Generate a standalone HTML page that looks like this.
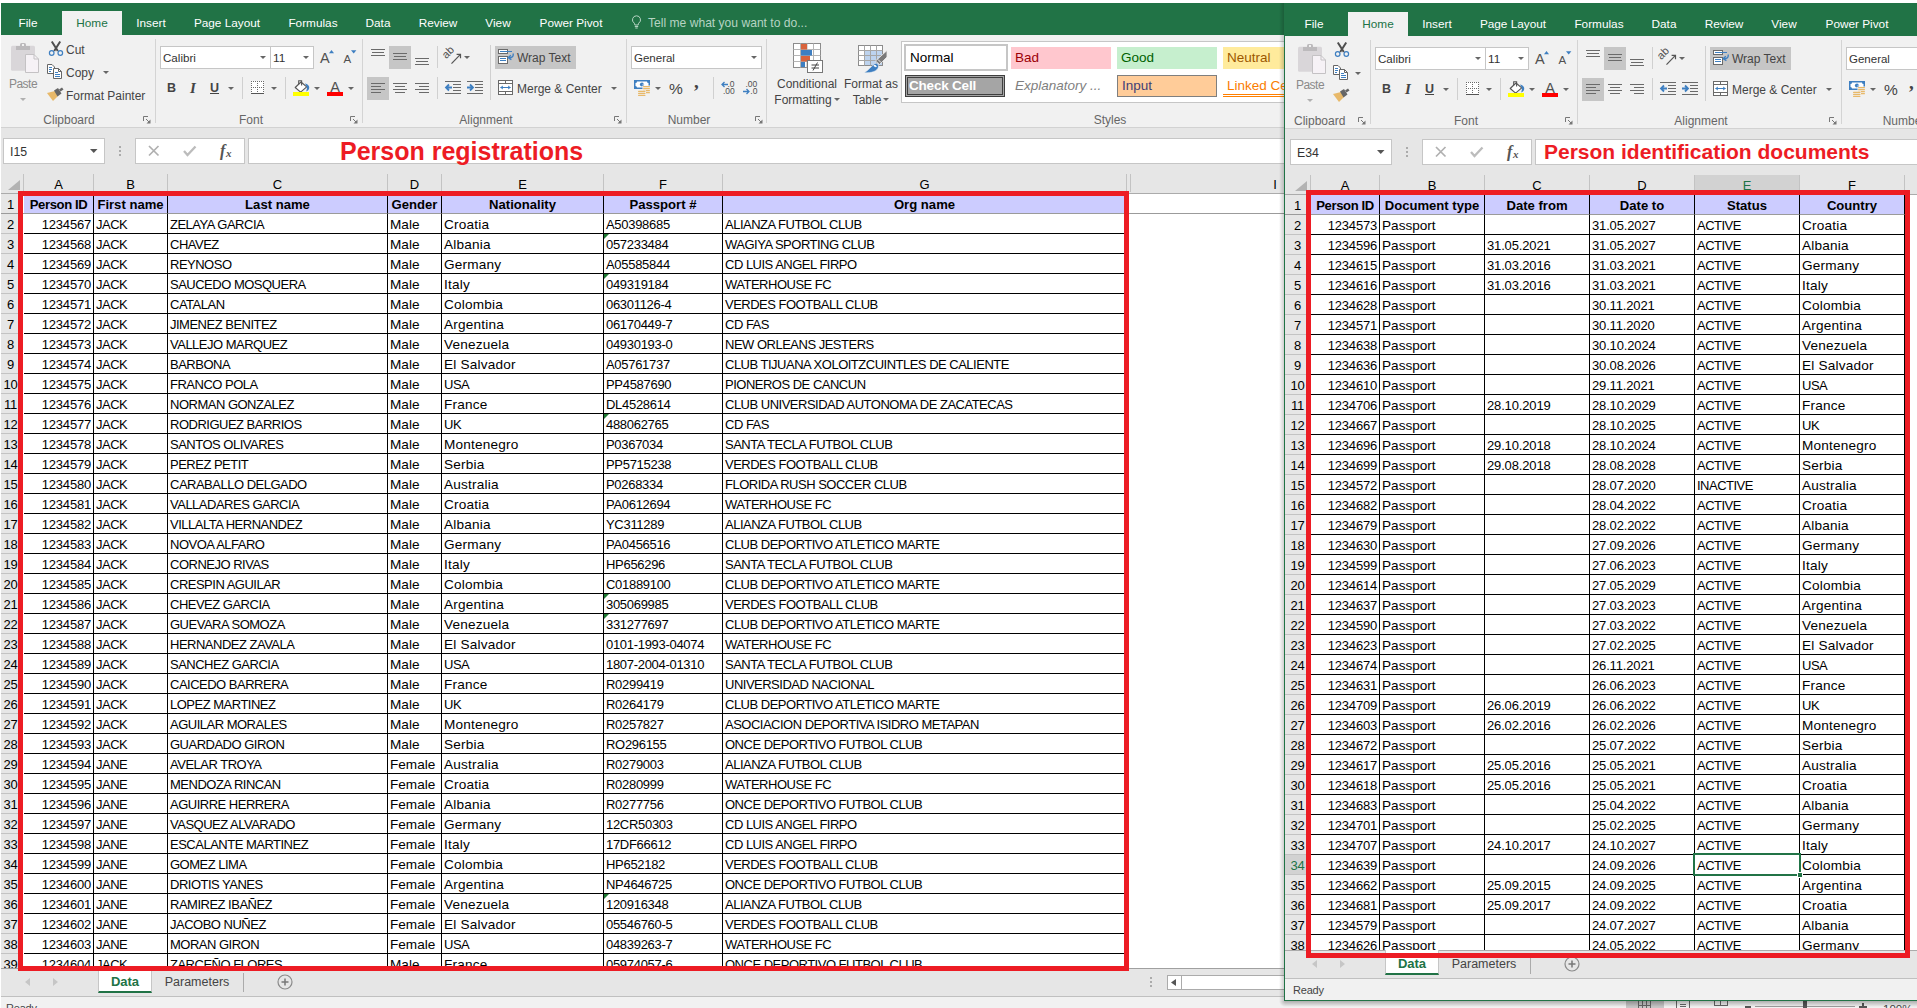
<!DOCTYPE html>
<html lang="en"><head><meta charset="utf-8"><title>Excel - Person registrations</title>
<style>
*{box-sizing:border-box;margin:0;padding:0}
html,body{width:1917px;height:1008px;overflow:hidden;background:#fff}
body{position:relative;font-family:"Liberation Sans",sans-serif;font-size:12px;color:#444}
.abs,.abs>*{position:absolute}
.win{position:absolute;overflow:hidden}
.ui{position:absolute;white-space:nowrap;line-height:14px;font-size:12px;color:#444}
.tab{position:absolute;top:0;height:24px;line-height:24px;font-size:12.3px;color:#fff;white-space:nowrap;text-align:center}
.lbl{position:absolute;white-space:nowrap;font-size:12px;line-height:14px;color:#666;text-align:center}
.vsep{position:absolute;width:1px;background:#d0d0d0}
.gsep{position:absolute;width:1px;background:#d4d4d4}
.hl{position:absolute;background:#c6c6c6}
.box{position:absolute;background:#fff;border:1px solid #c6c6c6}
.dd{position:absolute;width:0;height:0;border-left:3px solid transparent;border-right:3px solid transparent;border-top:3px solid #666}
svg{position:absolute;overflow:visible}
table.grid{position:absolute;border-collapse:separate;border-spacing:0;table-layout:fixed;font-size:13px;color:#000}
table.grid td{height:20px;border-right:1px solid #000;border-bottom:1px solid #000;padding:0 0 0 2px;overflow:hidden;white-space:nowrap;line-height:19px;vertical-align:top;position:relative}
table.grid td span{display:block;position:relative;top:1px}
table.grid tr.h td{background:#ccccff;font-weight:bold;text-align:center;padding:0;border-bottom-color:#9a9a9a;font-size:13.1px}
td.n{text-align:right;padding:0 2px 0 0 !important;letter-spacing:-0.2px}
td.u{letter-spacing:-0.5px}
td.m{font-size:13.6px}
td.c{font-size:13.6px;letter-spacing:0.2px}
td.d{letter-spacing:-0.15px}
td.p{letter-spacing:-0.3px}
td.e:before{content:"";position:absolute;left:0;top:0;border-top:5px solid #1e7b34;border-right:5px solid transparent}
.rh{position:absolute;font-size:13px;color:#000;text-align:center;line-height:20px;height:20px;letter-spacing:-0.3px}
.ch{position:absolute;font-size:13px;color:#000;text-align:center;line-height:16px;height:16px}
</style></head>
<body>
<div style="position:absolute;left:1px;top:3px;width:1916px;height:32px;background:#217346"></div><div style="position:absolute;left:1px;top:11px"><div class="ui" style="left:-23.0px;top:5px;width:100px;text-align:center;color:#fff;font-size:11.8px">File</div><div style="position:absolute;left:61px;top:0px;width:60px;height:25px;background:#f1f1f1"></div><div class="ui" style="left:51.0px;top:5px;width:80px;text-align:center;color:#217346;font-size:11.8px">Home</div><div class="ui" style="left:100.0px;top:5px;width:100px;text-align:center;color:#fff;font-size:11.8px">Insert</div><div class="ui" style="left:176.0px;top:5px;width:100px;text-align:center;color:#fff;font-size:11.8px">Page Layout</div><div class="ui" style="left:262.0px;top:5px;width:100px;text-align:center;color:#fff;font-size:11.8px">Formulas</div><div class="ui" style="left:327.0px;top:5px;width:100px;text-align:center;color:#fff;font-size:11.8px">Data</div><div class="ui" style="left:387.0px;top:5px;width:100px;text-align:center;color:#fff;font-size:11.8px">Review</div><div class="ui" style="left:447.0px;top:5px;width:100px;text-align:center;color:#fff;font-size:11.8px">View</div><div class="ui" style="left:520.0px;top:5px;width:100px;text-align:center;color:#fff;font-size:11.8px">Power Pivot</div></div><svg style="left:631px;top:15px" width="12" height="15" viewBox="0 0 12 15"><path d="M5.5 0.8a4 4 0 0 0-2.3 7.3c.5.5.6 1 .6 1.9h3.4c0-.9.1-1.4.6-1.9A4 4 0 0 0 5.5 0.8Z" fill="none" stroke="#b6d4c3" stroke-width="1"/><path d="M3.8 11.5H7.2M4.3 13H6.7" stroke="#b6d4c3" stroke-width="1"/></svg><div class="ui" style="left:648px;top:16px;color:#b6d4c3;font-size:12.1px">Tell me what you want to do...</div><div style="position:absolute;left:1px;top:35px;width:1916px;height:93px;background:#f1f1f1;border-bottom:1px solid #d2d2d2"></div><svg style="left:10px;top:42px" width="30" height="32" viewBox="0 0 30 32"><rect x="1" y="3.8" width="24" height="25" rx="1.5" fill="#d9d6d9"/><rect x="6" y="4" width="14" height="4" fill="#bcbabc"/><path d="M10 4V2.5a1.5 1.5 0 0 1 1.5-1.5h3a1.5 1.5 0 0 1 1.5 1.5V4Z" fill="#bcbabc"/><rect x="12" y="2" width="2" height="2" fill="#f1f1f1"/><path d="M15.5 12.5H24L28.5 17V30.5H15.5Z" fill="#f6f2f6" stroke="#c4c2c4"/><path d="M24 12.5V17H28.5" fill="none" stroke="#c4c2c4"/></svg><div class="ui" style="left:-2.0px;top:77px;width:50px;text-align:center;color:#8a8a8a;letter-spacing:-0.5px">Paste</div><div class="dd" style="left:20px;top:98px;border-top-color:#b0b0b0"></div><svg style="left:48px;top:41px" width="16" height="16" viewBox="0 0 16 16"><path d="M3.8 0.5L9.8 10M12.2 0.5L6.2 10" stroke="#4f4f4f" stroke-width="2" fill="none"/><circle cx="3.7" cy="12" r="2.3" fill="#f1f1f1" stroke="#3e7fc1" stroke-width="1.2"/><circle cx="12.3" cy="12" r="2.3" fill="#f1f1f1" stroke="#3e7fc1" stroke-width="1.2"/></svg><div class="ui" style="left:66px;top:43px;color:#444">Cut</div><svg style="left:47px;top:64px" width="16" height="15" viewBox="0 0 16 15"><path d="M0.5 0.5H5L7.5 3V9.5H0.5Z" fill="#fff" stroke="#666"/><path d="M2 3.5H5M2 5.5H5M2 7.5H4" stroke="#3e7fc1"/><path d="M6.5 4.5H11.5L14.5 7.5V14.5H6.5Z" fill="#fff" stroke="#666"/><path d="M11.5 4.5V7.5H14.5" fill="none" stroke="#666"/><path d="M8 8.5H11M8 10.5H13M8 12.5H13" stroke="#3e7fc1"/></svg><div class="ui" style="left:66px;top:66px;color:#444">Copy</div><div class="dd" style="left:103px;top:71px;border-top-color:#666"></div><svg style="left:47px;top:87px" width="17" height="16" viewBox="0 0 17 16"><path d="M0 6L8 4L11 9L6 14Z" fill="#e8b96a"/><path d="M7 3.5L11 1L14.5 6.5L10.5 9.5Z" fill="#666"/><path d="M12 2.5L15 0.5L16.5 2.5L13.5 4.5Z" fill="#666"/></svg><div class="ui" style="left:66px;top:89px;color:#444">Format Painter</div><div class="lbl" style="left:29.0px;top:113px;width:80px;text-align:center;">Clipboard</div><svg style="left:143px;top:116px" width="8" height="8" viewBox="0 0 8 8"><path d="M0.5 5V0.5H5" fill="none" stroke="#777" stroke-width="1"/><path d="M3 3L6.5 6.5" stroke="#777" stroke-width="1"/><path d="M7.5 3.5V7.5H3.5Z" fill="#777"/></svg><div class="gsep" style="left:155px;top:39px;height:84px"></div><div class="box" style="position:absolute;left:160px;top:46px;width:111px;height:23px;"></div><div class="ui" style="left:163px;top:51px;color:#333;font-size:11.6px">Calibri</div><div class="dd" style="left:260px;top:56px;border-top-color:#666"></div><div class="box" style="position:absolute;left:270px;top:46px;width:44px;height:23px;"></div><div class="ui" style="left:273px;top:51px;color:#333;font-size:11.8px">11</div><div class="dd" style="left:303px;top:56px;border-top-color:#666"></div><svg style="left:318px;top:49px" width="20" height="18" viewBox="0 0 20 18"><text x="2" y="14" font-family="Liberation Sans,sans-serif" font-size="14.5" fill="#505050">A</text><path d="M11 4.2L13.5 1L16 4.2Z" fill="#3e7fc1"/></svg><svg style="left:341px;top:49px" width="20" height="18" viewBox="0 0 20 18"><text x="2.5" y="14" font-family="Liberation Sans,sans-serif" font-size="11.5" fill="#505050">A</text><path d="M10 1.2H15.4L12.7 4.4Z" fill="#3e7fc1"/></svg><div class="ui" style="left:167px;top:80px;font-weight:bold;font-size:12.5px;color:#444;line-height:16px">B</div><div class="ui" style="left:190px;top:80px;font-style:italic;font-family:'Liberation Serif',serif;font-weight:bold;font-size:15px;color:#444;line-height:16px">I</div><div class="ui" style="left:210px;top:80px;text-decoration:underline;font-size:12.5px;font-weight:bold;color:#444;line-height:16px">U</div><div class="dd" style="left:228px;top:87px;border-top-color:#666"></div><div class="vsep" style="left:242px;top:77px;height:22px"></div><svg style="left:251px;top:81px" width="13" height="13" viewBox="0 0 13 13"><rect x="0" y="0" width="13" height="13" fill="#fff"/><rect x="0" y="0" width="1" height="1" fill="#6a6a6a"/><rect x="0" y="6" width="1" height="1" fill="#6a6a6a"/><rect x="2" y="0" width="1" height="1" fill="#6a6a6a"/><rect x="2" y="6" width="1" height="1" fill="#6a6a6a"/><rect x="4" y="0" width="1" height="1" fill="#6a6a6a"/><rect x="4" y="6" width="1" height="1" fill="#6a6a6a"/><rect x="6" y="0" width="1" height="1" fill="#6a6a6a"/><rect x="6" y="6" width="1" height="1" fill="#6a6a6a"/><rect x="8" y="0" width="1" height="1" fill="#6a6a6a"/><rect x="8" y="6" width="1" height="1" fill="#6a6a6a"/><rect x="10" y="0" width="1" height="1" fill="#6a6a6a"/><rect x="10" y="6" width="1" height="1" fill="#6a6a6a"/><rect x="12" y="0" width="1" height="1" fill="#6a6a6a"/><rect x="12" y="6" width="1" height="1" fill="#6a6a6a"/><rect x="0" y="2" width="1" height="1" fill="#6a6a6a"/><rect x="6" y="2" width="1" height="1" fill="#6a6a6a"/><rect x="12" y="2" width="1" height="1" fill="#6a6a6a"/><rect x="0" y="4" width="1" height="1" fill="#6a6a6a"/><rect x="6" y="4" width="1" height="1" fill="#6a6a6a"/><rect x="12" y="4" width="1" height="1" fill="#6a6a6a"/><rect x="0" y="6" width="1" height="1" fill="#6a6a6a"/><rect x="6" y="6" width="1" height="1" fill="#6a6a6a"/><rect x="12" y="6" width="1" height="1" fill="#6a6a6a"/><rect x="0" y="8" width="1" height="1" fill="#6a6a6a"/><rect x="6" y="8" width="1" height="1" fill="#6a6a6a"/><rect x="12" y="8" width="1" height="1" fill="#6a6a6a"/><rect x="0" y="10" width="1" height="1" fill="#6a6a6a"/><rect x="6" y="10" width="1" height="1" fill="#6a6a6a"/><rect x="12" y="10" width="1" height="1" fill="#6a6a6a"/><rect x="0" y="12" width="13" height="1" fill="#555"/></svg><div class="dd" style="left:271px;top:87px;border-top-color:#666"></div><div class="vsep" style="left:285px;top:77px;height:22px"></div><svg style="left:292px;top:79px" width="18" height="18" viewBox="0 0 18 18"><path d="M9 3L14.7 7.9L8.6 13.2L3.2 8.5Z" fill="#fff" stroke="#555" stroke-width="1.1" stroke-linejoin="round"/><path d="M6.7 5.3V1.7H9.6V6.6" fill="none" stroke="#555" stroke-width="1.1"/><path d="M13 4.6C16 5 18 7.5 17 10C16.5 11.2 15.5 12 14.2 12.4C14.8 10.5 15 9.5 14.9 8Z" fill="#3e7fc1"/><rect x="1" y="13" width="16" height="4" fill="#ffff00"/></svg><div class="dd" style="left:314px;top:87px;border-top-color:#666"></div><svg style="left:326px;top:80px" width="18" height="18" viewBox="0 0 18 18"><text x="9" y="12" text-anchor="middle" font-family="Liberation Sans,sans-serif" font-size="14.5" fill="#505050">A</text><rect x="1" y="12" width="16" height="4" fill="#ff0000"/></svg><div class="dd" style="left:348px;top:87px;border-top-color:#666"></div><div class="lbl" style="left:221.0px;top:113px;width:60px;text-align:center;">Font</div><svg style="left:350px;top:116px" width="8" height="8" viewBox="0 0 8 8"><path d="M0.5 5V0.5H5" fill="none" stroke="#777" stroke-width="1"/><path d="M3 3L6.5 6.5" stroke="#777" stroke-width="1"/><path d="M7.5 3.5V7.5H3.5Z" fill="#777"/></svg><div class="gsep" style="left:362px;top:39px;height:84px"></div><div class="hl" style="position:absolute;left:389px;top:46px;width:22px;height:23px;"></div><svg style="left:371px;top:48px" width="14" height="18" viewBox="0 0 14 18"><rect x="0" y="1" width="14" height="1" fill="#6a6a6a"/><rect x="1" y="4" width="12" height="1" fill="#6a6a6a"/><rect x="0" y="7" width="14" height="1" fill="#6a6a6a"/></svg><svg style="left:393px;top:48px" width="14" height="18" viewBox="0 0 14 18"><rect x="0" y="5" width="14" height="1" fill="#6a6a6a"/><rect x="1" y="8" width="12" height="1" fill="#6a6a6a"/><rect x="0" y="11" width="14" height="1" fill="#6a6a6a"/></svg><svg style="left:415px;top:48px" width="14" height="18" viewBox="0 0 14 18"><rect x="0" y="10" width="14" height="1" fill="#6a6a6a"/><rect x="1" y="13" width="12" height="1" fill="#6a6a6a"/><rect x="0" y="16" width="14" height="1" fill="#6a6a6a"/></svg><div class="vsep" style="left:437px;top:46px;height:22px"></div><svg style="left:443px;top:48px" width="20" height="18" viewBox="0 0 20 18"><text x="0" y="0" transform="translate(3.2,11.2) rotate(-45)" font-family="Liberation Sans,sans-serif" font-size="11" fill="#505050">ab</text><path d="M8.5 15.6L17.2 6.7" stroke="#555" stroke-width="1.2"/><path d="M13.6 6.4H17.5V10.3" fill="none" stroke="#555" stroke-width="1.2"/></svg><div class="dd" style="left:464px;top:56px;border-top-color:#666"></div><div class="vsep" style="left:490px;top:45px;height:55px"></div><div class="hl" style="position:absolute;left:495px;top:46px;width:81px;height:23px;"></div><svg style="left:498px;top:48px" width="18" height="18" viewBox="0 0 18 18"><rect x="0.5" y="1.5" width="9" height="4" fill="#fff" stroke="#6a6a6a"/><rect x="0.5" y="8.5" width="9" height="7" fill="#fff" stroke="#6a6a6a"/><path d="M2 3.5H14" stroke="#3e7fc1" stroke-width="1"/><path d="M2 10.5H8M2 12.5H8" stroke="#3e7fc1" stroke-width="1"/><path d="M15 5.5c1 2.2-.5 4.6-4.2 4.2" fill="none" stroke="#3e7fc1" stroke-width="1.4"/><path d="M12.8 7.2L10.2 9.7L13.4 11.6" fill="none" stroke="#3e7fc1" stroke-width="1.4"/></svg><div class="ui" style="left:517px;top:51px;color:#444">Wrap Text</div><div class="hl" style="position:absolute;left:367px;top:77px;width:22px;height:23px;"></div><svg style="left:371px;top:79px" width="14" height="18" viewBox="0 0 14 18"><rect x="0" y="4" width="14" height="1" fill="#6a6a6a"/><rect x="0" y="7" width="10" height="1" fill="#6a6a6a"/><rect x="0" y="10" width="14" height="1" fill="#6a6a6a"/><rect x="0" y="13" width="10" height="1" fill="#6a6a6a"/></svg><svg style="left:393px;top:79px" width="14" height="18" viewBox="0 0 14 18"><rect x="0.0" y="4" width="14" height="1" fill="#6a6a6a"/><rect x="2.0" y="7" width="10" height="1" fill="#6a6a6a"/><rect x="0.0" y="10" width="14" height="1" fill="#6a6a6a"/><rect x="2.0" y="13" width="10" height="1" fill="#6a6a6a"/></svg><svg style="left:415px;top:79px" width="14" height="18" viewBox="0 0 14 18"><rect x="0" y="4" width="14" height="1" fill="#6a6a6a"/><rect x="4" y="7" width="10" height="1" fill="#6a6a6a"/><rect x="0" y="10" width="14" height="1" fill="#6a6a6a"/><rect x="4" y="13" width="10" height="1" fill="#6a6a6a"/></svg><div class="vsep" style="left:437px;top:77px;height:22px"></div><svg style="left:445px;top:80px" width="16" height="15" viewBox="0 0 16 15"><rect x="0" y="1" width="16" height="1" fill="#6a6a6a"/><rect x="0" y="13" width="16" height="1" fill="#6a6a6a"/><rect x="8" y="4" width="8" height="1" fill="#6a6a6a"/><rect x="8" y="7" width="8" height="1" fill="#6a6a6a"/><rect x="8" y="10" width="8" height="1" fill="#6a6a6a"/><path d="M7 7.5H1.2M4 4.5L1 7.5L4 10.5" fill="none" stroke="#3e7fc1" stroke-width="1.8"/></svg><svg style="left:467px;top:80px" width="16" height="15" viewBox="0 0 16 15"><rect x="0" y="1" width="16" height="1" fill="#6a6a6a"/><rect x="0" y="13" width="16" height="1" fill="#6a6a6a"/><rect x="8" y="4" width="8" height="1" fill="#6a6a6a"/><rect x="8" y="7" width="8" height="1" fill="#6a6a6a"/><rect x="8" y="10" width="8" height="1" fill="#6a6a6a"/><path d="M0 7.5H5.8M3 4.5L6 7.5L3 10.5" fill="none" stroke="#3e7fc1" stroke-width="1.8"/></svg><svg style="left:498px;top:80px" width="15" height="15" viewBox="0 0 15 15"><rect x="0.5" y="0.5" width="14" height="14" fill="#fff" stroke="#6a6a6a"/><path d="M0.5 3.5H14.5M0.5 11.5H14.5M7.5 0.5V3.5M7.5 11.5V14.5" stroke="#6a6a6a"/><path d="M2.5 7.5H12.5" fill="none" stroke="#3e7fc1" stroke-width="1"/><path d="M4.8 5.5L2.3 7.5L4.8 9.5ZM10.2 5.5L12.7 7.5L10.2 9.5Z" fill="#3e7fc1"/></svg><div class="ui" style="left:517px;top:82px;color:#444">Merge &amp; Center</div><div class="dd" style="left:611px;top:87px;border-top-color:#666"></div><div class="lbl" style="left:446.0px;top:113px;width:80px;text-align:center;">Alignment</div><svg style="left:614px;top:116px" width="8" height="8" viewBox="0 0 8 8"><path d="M0.5 5V0.5H5" fill="none" stroke="#777" stroke-width="1"/><path d="M3 3L6.5 6.5" stroke="#777" stroke-width="1"/><path d="M7.5 3.5V7.5H3.5Z" fill="#777"/></svg><div class="gsep" style="left:626px;top:39px;height:84px"></div><div class="box" style="position:absolute;left:631px;top:46px;width:131px;height:23px;"></div><div class="ui" style="left:634px;top:51px;color:#333;font-size:11.5px">General</div><div class="dd" style="left:751px;top:56px;border-top-color:#666"></div><svg style="left:634px;top:80px" width="18" height="18" viewBox="0 0 18 18"><rect x="0" y="0" width="16" height="9" fill="#3e7fc1"/><path d="M1.5 3a1.5 1.5 0 0 0 1.5-1.5H13a1.5 1.5 0 0 0 1.5 1.5V6a1.5 1.5 0 0 0-1.5 1.5H3A1.5 1.5 0 0 0 1.5 6Z" fill="#fff"/><circle cx="8" cy="4.5" r="2.1" fill="#3e7fc1"/><path d="M8 4.5H10.5V3Z" fill="#fff"/><rect x="8.5" y="5.5" width="8" height="8" fill="#f1f1f1"/><rect x="9" y="6" width="7" height="1.3" rx="0.65" fill="#e8b96a"/><rect x="9" y="8" width="7" height="1.3" rx="0.65" fill="#e8b96a"/><rect x="9" y="10" width="7" height="1.3" rx="0.65" fill="#e8b96a"/><rect x="9" y="12" width="7" height="1.3" rx="0.65" fill="#e8b96a"/><rect x="3.5" y="10.2" width="8.5" height="6" fill="#f1f1f1"/><rect x="4" y="10.8" width="7.5" height="1.3" rx="0.65" fill="#e8b96a"/><rect x="4" y="12.8" width="7.5" height="1.3" rx="0.65" fill="#e8b96a"/><rect x="4" y="14.8" width="7.5" height="1.3" rx="0.65" fill="#e8b96a"/></svg><div class="dd" style="left:655px;top:87px;border-top-color:#666"></div><div class="ui" style="left:669px;top:80px;font-size:15.5px;color:#444;line-height:18px">%</div><div class="ui" style="left:694px;top:73px;font-size:19px;font-weight:bold;font-family:'Liberation Serif',serif;color:#444;line-height:18px">,</div><div class="vsep" style="left:713px;top:77px;height:22px"></div><svg style="left:721px;top:80px" width="16" height="15" viewBox="0 0 16 15"><path d="M7 4.5H1.2M3.5 2L1 4.5L3.5 7" fill="none" stroke="#3e7fc1" stroke-width="1.3"/><text x="6.5" y="6.5" font-family="Liberation Sans,sans-serif" font-size="8.5" fill="#505050">.0</text><text x="2" y="14" font-family="Liberation Sans,sans-serif" font-size="8.5" fill="#505050">.00</text></svg><svg style="left:743px;top:80px" width="16" height="15" viewBox="0 0 16 15"><text x="2.5" y="6.5" font-family="Liberation Sans,sans-serif" font-size="8.5" fill="#505050">.00</text><path d="M0 11.5H6M3.5 9L6 11.5L3.5 14" fill="none" stroke="#3e7fc1" stroke-width="1.3"/><text x="7.3" y="14" font-family="Liberation Sans,sans-serif" font-size="8.5" fill="#505050">.0</text></svg><div class="lbl" style="left:649.0px;top:113px;width:80px;text-align:center;">Number</div><svg style="left:755px;top:116px" width="8" height="8" viewBox="0 0 8 8"><path d="M0.5 5V0.5H5" fill="none" stroke="#777" stroke-width="1"/><path d="M3 3L6.5 6.5" stroke="#777" stroke-width="1"/><path d="M7.5 3.5V7.5H3.5Z" fill="#777"/></svg><div class="gsep" style="left:766px;top:39px;height:84px"></div><svg style="left:793px;top:43px" width="31" height="31" viewBox="0 0 31 31"><rect x="0.5" y="0.5" width="27" height="24" fill="#fff" stroke="#8c8c8c"/><path d="M7.5 0.5V24.5" stroke="#b5b5b5"/><path d="M14 0.5V24.5" stroke="#b5b5b5"/><path d="M20.5 0.5V24.5" stroke="#b5b5b5"/><path d="M0.5 6.5H27.5" stroke="#b5b5b5"/><path d="M0.5 12.5H27.5" stroke="#b5b5b5"/><path d="M0.5 18.5H27.5" stroke="#b5b5b5"/><rect x="8" y="1" width="6" height="5.5" fill="#d9633c"/><rect x="8" y="7" width="11" height="5.5" fill="#3e7fc1"/><rect x="8" y="13" width="9" height="5.5" fill="#d9633c"/><rect x="8" y="19" width="4" height="5" fill="#3e7fc1"/><rect x="14.5" y="17.5" width="15" height="12" fill="#fff" stroke="#777"/><path d="M18.5 22H26M18.5 25H26M24.5 19.5L20 27.5" stroke="#444" stroke-width="1" fill="none"/></svg><div class="ui" style="left:762.0px;top:77px;width:90px;text-align:center;color:#444">Conditional</div><div class="ui" style="left:758.0px;top:93px;width:90px;text-align:center;color:#444">Formatting</div><div class="dd" style="left:834px;top:98px;border-top-color:#666"></div><svg style="left:858px;top:45px" width="31" height="30" viewBox="0 0 31 30"><rect x="0.5" y="0.5" width="24" height="20" fill="#fff" stroke="#8c8c8c"/><rect x="7" y="6" width="17" height="14" fill="#bdd3ee"/><path d="M6.5 0.5V20.5" stroke="#a6a6a6"/><path d="M12.5 0.5V20.5" stroke="#a6a6a6"/><path d="M18.5 0.5V20.5" stroke="#a6a6a6"/><path d="M0.5 5.5H24.5" stroke="#a6a6a6"/><path d="M0.5 10.5H24.5" stroke="#a6a6a6"/><path d="M0.5 15.5H24.5" stroke="#a6a6a6"/><path d="M29 5.5V12L21.5 19.5L17.5 16Z" fill="#7a7a7a" stroke="#f1f1f1" stroke-width="0.8"/><path d="M20 14.5L23 17.5" stroke="#f1f1f1" stroke-width="1"/><path d="M17 18.5c2-.8 4 .8 3.5 3.5c-1.5 4.5-6.5 6-14.5 5.8c4.5-2.5 7-6.3 11-9.3Z" fill="#3e7fc1" stroke="#f1f1f1" stroke-width="0.6"/><path d="M15.5 20.5c1.2-.9 2.8-.3 3.3 1.2l-1.3.6l-.5-.9l-.8.3Z" fill="#fff"/></svg><div class="ui" style="left:826.0px;top:77px;width:90px;text-align:center;color:#444">Format as</div><div class="ui" style="left:837.0px;top:93px;width:60px;text-align:center;color:#444">Table</div><div class="dd" style="left:883px;top:98px;border-top-color:#666"></div><div style="position:absolute;left:901px;top:41px;width:400px;height:62px;background:#fff;border:1px solid #c6c6c6"></div><div style="position:absolute;left:904px;top:44px;width:104px;height:27px;background:#fff;border:2px solid #c6c6c6"></div><div style="position:absolute;left:906px;top:46px;width:100px;height:23px;font-size:13.5px;line-height:16px;white-space:nowrap;padding-left:4px;color:#000;padding-top:4px">Normal</div><div style="position:absolute;left:1011px;top:47px;width:100px;height:22px;font-size:13.5px;line-height:16px;white-space:nowrap;padding-left:4px;background:#ffc7ce;color:#9c0006;padding-top:3px">Bad</div><div style="position:absolute;left:1117px;top:47px;width:100px;height:22px;font-size:13.5px;line-height:16px;white-space:nowrap;padding-left:4px;background:#c6efce;color:#006100;padding-top:3px">Good</div><div style="position:absolute;left:1223px;top:47px;width:100px;height:22px;font-size:13.5px;line-height:16px;white-space:nowrap;padding-left:4px;background:#ffeb9c;color:#9c5700;padding-top:3px">Neutral</div><div style="position:absolute;left:905px;top:75px;width:100px;height:22px;font-size:13.5px;line-height:16px;white-space:nowrap;padding-left:4px;background:#a5a5a5;color:#fff;font-weight:bold;border:3px double #3f3f3f;padding-left:1px;padding-top:0;line-height:15px;letter-spacing:-0.2px">Check Cell</div><div style="position:absolute;left:1011px;top:75px;width:100px;height:22px;font-size:13.5px;line-height:16px;white-space:nowrap;padding-left:4px;color:#7f7f7f;font-style:italic;padding-top:3px">Explanatory ...</div><div style="position:absolute;left:1117px;top:75px;width:100px;height:22px;font-size:13.5px;line-height:16px;white-space:nowrap;padding-left:4px;background:#ffcc99;color:#3f3f76;border:1px solid #7f7f7f;padding-top:2px">Input</div><div style="position:absolute;left:1223px;top:75px;width:100px;height:22px;font-size:13.5px;line-height:16px;white-space:nowrap;padding-left:4px;color:#fa7d00;border-bottom:3px double #ff8001;padding-top:3px">Linked Cell</div><div class="lbl" style="left:1070.0px;top:113px;width:80px;text-align:center;">Styles</div><div style="position:absolute;left:1px;top:128px;width:1916px;height:66px;background:#e6e6e6"></div><div class="box" style="position:absolute;left:3px;top:138px;width:102px;height:26px;"></div><div class="ui" style="left:10px;top:145px;color:#333;font-size:12.3px">I15</div><svg style="left:90px;top:149px" width="8" height="4"><path d="M0 0H7.5L3.75 4Z" fill="#555"/></svg><div style="position:absolute;left:119px;top:146px;width:2px;height:2px;background:#ababab"></div><div style="position:absolute;left:119px;top:150px;width:2px;height:2px;background:#ababab"></div><div style="position:absolute;left:119px;top:154px;width:2px;height:2px;background:#ababab"></div><div class="box" style="position:absolute;left:135px;top:138px;width:110px;height:26px;"></div><svg style="left:148px;top:145px" width="12" height="12" viewBox="0 0 12 12"><path d="M1 1L10.5 10.5M10.5 1L1 10.5" stroke="#b0b0b0" stroke-width="1.7"/></svg><svg style="left:183px;top:145px" width="14" height="12" viewBox="0 0 14 12"><path d="M1 6L4.5 10L12.5 1.5" fill="none" stroke="#bcbcbc" stroke-width="2.3"/></svg><div class="ui" style="left:220px;top:142px;font-family:'Liberation Serif',serif;font-style:italic;font-weight:bold;font-size:16px;color:#555;line-height:18px">f</div><div class="ui" style="left:226px;top:147px;font-family:'Liberation Serif',serif;font-style:italic;font-weight:bold;font-size:11px;color:#555;line-height:12px">x</div><div class="box" style="position:absolute;left:248px;top:138px;width:1040px;height:26px;"></div><div style="position:absolute;left:340px;top:135px;font-size:25px;line-height:32px;font-weight:bold;color:#ed1c24;white-space:nowrap;letter-spacing:0px">Person registrations</div>
<div style="position:absolute;left:1px;top:194px;width:1283px;height:774px;background:#fff"></div><div style="position:absolute;left:1px;top:194px;width:22px;height:774px;background:#e6e6e6"></div><svg style="left:8px;top:180px" width="12" height="10"><path d="M12 0V10H0Z" fill="#b3b3b3"/></svg><div style="position:absolute;left:23px;top:174px;width:1px;height:18px;background:#c3c3c3"></div><div style="position:absolute;left:93px;top:174px;width:1px;height:18px;background:#c3c3c3"></div><div style="position:absolute;left:167px;top:174px;width:1px;height:18px;background:#c3c3c3"></div><div style="position:absolute;left:387px;top:174px;width:1px;height:18px;background:#c3c3c3"></div><div style="position:absolute;left:441px;top:174px;width:1px;height:18px;background:#c3c3c3"></div><div style="position:absolute;left:603px;top:174px;width:1px;height:18px;background:#c3c3c3"></div><div style="position:absolute;left:722px;top:174px;width:1px;height:18px;background:#c3c3c3"></div><div style="position:absolute;left:1126px;top:174px;width:1px;height:18px;background:#c3c3c3"></div><div style="position:absolute;left:1130px;top:174px;width:1px;height:18px;background:#c3c3c3"></div><div style="position:absolute;left:1px;top:193px;width:1283px;height:1px;background:#ababab"></div><div class="ch" style="left:38.5px;top:177px;width:40px">A</div><div class="ch" style="left:110.5px;top:177px;width:40px">B</div><div class="ch" style="left:257.5px;top:177px;width:40px">C</div><div class="ch" style="left:394.5px;top:177px;width:40px">D</div><div class="ch" style="left:502.5px;top:177px;width:40px">E</div><div class="ch" style="left:643.0px;top:177px;width:40px">F</div><div class="ch" style="left:904.5px;top:177px;width:40px">G</div><div class="ch" style="left:1255px;top:177px;width:40px">I</div><div class="rh" style="left:0px;top:195px;width:21px">1</div><div style="position:absolute;left:1px;top:213px;width:22px;height:1px;background:#9b9b9b"></div><div class="rh" style="left:0px;top:215px;width:21px">2</div><div style="position:absolute;left:1px;top:233px;width:22px;height:1px;background:#c3c3c3"></div><div class="rh" style="left:0px;top:235px;width:21px">3</div><div style="position:absolute;left:1px;top:253px;width:22px;height:1px;background:#c3c3c3"></div><div class="rh" style="left:0px;top:255px;width:21px">4</div><div style="position:absolute;left:1px;top:273px;width:22px;height:1px;background:#c3c3c3"></div><div class="rh" style="left:0px;top:275px;width:21px">5</div><div style="position:absolute;left:1px;top:293px;width:22px;height:1px;background:#c3c3c3"></div><div class="rh" style="left:0px;top:295px;width:21px">6</div><div style="position:absolute;left:1px;top:313px;width:22px;height:1px;background:#c3c3c3"></div><div class="rh" style="left:0px;top:315px;width:21px">7</div><div style="position:absolute;left:1px;top:333px;width:22px;height:1px;background:#c3c3c3"></div><div class="rh" style="left:0px;top:335px;width:21px">8</div><div style="position:absolute;left:1px;top:353px;width:22px;height:1px;background:#c3c3c3"></div><div class="rh" style="left:0px;top:355px;width:21px">9</div><div style="position:absolute;left:1px;top:373px;width:22px;height:1px;background:#c3c3c3"></div><div class="rh" style="left:0px;top:375px;width:21px">10</div><div style="position:absolute;left:1px;top:393px;width:22px;height:1px;background:#c3c3c3"></div><div class="rh" style="left:0px;top:395px;width:21px">11</div><div style="position:absolute;left:1px;top:413px;width:22px;height:1px;background:#c3c3c3"></div><div class="rh" style="left:0px;top:415px;width:21px">12</div><div style="position:absolute;left:1px;top:433px;width:22px;height:1px;background:#c3c3c3"></div><div class="rh" style="left:0px;top:435px;width:21px">13</div><div style="position:absolute;left:1px;top:453px;width:22px;height:1px;background:#c3c3c3"></div><div class="rh" style="left:0px;top:455px;width:21px">14</div><div style="position:absolute;left:1px;top:473px;width:22px;height:1px;background:#c3c3c3"></div><div class="rh" style="left:0px;top:475px;width:21px">15</div><div style="position:absolute;left:1px;top:493px;width:22px;height:1px;background:#c3c3c3"></div><div class="rh" style="left:0px;top:495px;width:21px">16</div><div style="position:absolute;left:1px;top:513px;width:22px;height:1px;background:#c3c3c3"></div><div class="rh" style="left:0px;top:515px;width:21px">17</div><div style="position:absolute;left:1px;top:533px;width:22px;height:1px;background:#c3c3c3"></div><div class="rh" style="left:0px;top:535px;width:21px">18</div><div style="position:absolute;left:1px;top:553px;width:22px;height:1px;background:#c3c3c3"></div><div class="rh" style="left:0px;top:555px;width:21px">19</div><div style="position:absolute;left:1px;top:573px;width:22px;height:1px;background:#c3c3c3"></div><div class="rh" style="left:0px;top:575px;width:21px">20</div><div style="position:absolute;left:1px;top:593px;width:22px;height:1px;background:#c3c3c3"></div><div class="rh" style="left:0px;top:595px;width:21px">21</div><div style="position:absolute;left:1px;top:613px;width:22px;height:1px;background:#c3c3c3"></div><div class="rh" style="left:0px;top:615px;width:21px">22</div><div style="position:absolute;left:1px;top:633px;width:22px;height:1px;background:#c3c3c3"></div><div class="rh" style="left:0px;top:635px;width:21px">23</div><div style="position:absolute;left:1px;top:653px;width:22px;height:1px;background:#c3c3c3"></div><div class="rh" style="left:0px;top:655px;width:21px">24</div><div style="position:absolute;left:1px;top:673px;width:22px;height:1px;background:#c3c3c3"></div><div class="rh" style="left:0px;top:675px;width:21px">25</div><div style="position:absolute;left:1px;top:693px;width:22px;height:1px;background:#c3c3c3"></div><div class="rh" style="left:0px;top:695px;width:21px">26</div><div style="position:absolute;left:1px;top:713px;width:22px;height:1px;background:#c3c3c3"></div><div class="rh" style="left:0px;top:715px;width:21px">27</div><div style="position:absolute;left:1px;top:733px;width:22px;height:1px;background:#c3c3c3"></div><div class="rh" style="left:0px;top:735px;width:21px">28</div><div style="position:absolute;left:1px;top:753px;width:22px;height:1px;background:#c3c3c3"></div><div class="rh" style="left:0px;top:755px;width:21px">29</div><div style="position:absolute;left:1px;top:773px;width:22px;height:1px;background:#c3c3c3"></div><div class="rh" style="left:0px;top:775px;width:21px">30</div><div style="position:absolute;left:1px;top:793px;width:22px;height:1px;background:#c3c3c3"></div><div class="rh" style="left:0px;top:795px;width:21px">31</div><div style="position:absolute;left:1px;top:813px;width:22px;height:1px;background:#c3c3c3"></div><div class="rh" style="left:0px;top:815px;width:21px">32</div><div style="position:absolute;left:1px;top:833px;width:22px;height:1px;background:#c3c3c3"></div><div class="rh" style="left:0px;top:835px;width:21px">33</div><div style="position:absolute;left:1px;top:853px;width:22px;height:1px;background:#c3c3c3"></div><div class="rh" style="left:0px;top:855px;width:21px">34</div><div style="position:absolute;left:1px;top:873px;width:22px;height:1px;background:#c3c3c3"></div><div class="rh" style="left:0px;top:875px;width:21px">35</div><div style="position:absolute;left:1px;top:893px;width:22px;height:1px;background:#c3c3c3"></div><div class="rh" style="left:0px;top:895px;width:21px">36</div><div style="position:absolute;left:1px;top:913px;width:22px;height:1px;background:#c3c3c3"></div><div class="rh" style="left:0px;top:915px;width:21px">37</div><div style="position:absolute;left:1px;top:933px;width:22px;height:1px;background:#c3c3c3"></div><div class="rh" style="left:0px;top:935px;width:21px">38</div><div style="position:absolute;left:1px;top:953px;width:22px;height:1px;background:#c3c3c3"></div><div class="rh" style="left:0px;top:955px;width:21px">39</div><div style="position:absolute;left:1px;top:213px;width:1283px;height:1px;background:#9b9b9b"></div><table class="grid" style="left:24px;top:194px;width:1103px"><colgroup><col style="width:70px"><col style="width:74px"><col style="width:220px"><col style="width:54px"><col style="width:162px"><col style="width:119px"><col style="width:404px"></colgroup><tr class="h"><td><span style="letter-spacing:-0.4px">Person ID</span></td><td><span>First name</span></td><td><span>Last name</span></td><td><span>Gender</span></td><td><span>Nationality</span></td><td><span>Passport #</span></td><td><span>Org name</span></td></tr><tr><td class="n"><span>1234567</span></td><td class="u"><span>JACK</span></td><td class="u"><span>ZELAYA GARCIA</span></td><td class="m"><span>Male</span></td><td class="c"><span>Croatia</span></td><td class="p"><span>A50398685</span></td><td class="u"><span>ALIANZA FUTBOL CLUB</span></td></tr><tr><td class="n"><span>1234568</span></td><td class="u"><span>JACK</span></td><td class="u"><span>CHAVEZ</span></td><td class="m"><span>Male</span></td><td class="c"><span>Albania</span></td><td class="p e"><span>057233484</span></td><td class="u"><span>WAGIYA SPORTING CLUB</span></td></tr><tr><td class="n"><span>1234569</span></td><td class="u"><span>JACK</span></td><td class="u"><span>REYNOSO</span></td><td class="m"><span>Male</span></td><td class="c"><span>Germany</span></td><td class="p"><span>A05585844</span></td><td class="u"><span>CD LUIS ANGEL FIRPO</span></td></tr><tr><td class="n"><span>1234570</span></td><td class="u"><span>JACK</span></td><td class="u"><span>SAUCEDO MOSQUERA</span></td><td class="m"><span>Male</span></td><td class="c"><span>Italy</span></td><td class="p e"><span>049319184</span></td><td class="u"><span>WATERHOUSE FC</span></td></tr><tr><td class="n"><span>1234571</span></td><td class="u"><span>JACK</span></td><td class="u"><span>CATALAN</span></td><td class="m"><span>Male</span></td><td class="c"><span>Colombia</span></td><td class="p"><span>06301126-4</span></td><td class="u"><span>VERDES FOOTBALL CLUB</span></td></tr><tr><td class="n"><span>1234572</span></td><td class="u"><span>JACK</span></td><td class="u"><span>JIMENEZ BENITEZ</span></td><td class="m"><span>Male</span></td><td class="c"><span>Argentina</span></td><td class="p"><span>06170449-7</span></td><td class="u"><span>CD FAS</span></td></tr><tr><td class="n"><span>1234573</span></td><td class="u"><span>JACK</span></td><td class="u"><span>VALLEJO MARQUEZ</span></td><td class="m"><span>Male</span></td><td class="c"><span>Venezuela</span></td><td class="p"><span>04930193-0</span></td><td class="u"><span>NEW ORLEANS JESTERS</span></td></tr><tr><td class="n"><span>1234574</span></td><td class="u"><span>JACK</span></td><td class="u"><span>BARBONA</span></td><td class="m"><span>Male</span></td><td class="c"><span>El Salvador</span></td><td class="p"><span>A05761737</span></td><td class="u"><span>CLUB TIJUANA XOLOITZCUINTLES DE CALIENTE</span></td></tr><tr><td class="n"><span>1234575</span></td><td class="u"><span>JACK</span></td><td class="u"><span>FRANCO POLA</span></td><td class="m"><span>Male</span></td><td class="u"><span>USA</span></td><td class="p"><span>PP4587690</span></td><td class="u"><span>PIONEROS DE CANCUN</span></td></tr><tr><td class="n"><span>1234576</span></td><td class="u"><span>JACK</span></td><td class="u"><span>NORMAN GONZALEZ</span></td><td class="m"><span>Male</span></td><td class="c"><span>France</span></td><td class="p"><span>DL4528614</span></td><td class="u"><span>CLUB UNIVERSIDAD AUTONOMA DE ZACATECAS</span></td></tr><tr><td class="n"><span>1234577</span></td><td class="u"><span>JACK</span></td><td class="u"><span>RODRIGUEZ BARRIOS</span></td><td class="m"><span>Male</span></td><td class="u"><span>UK</span></td><td class="p e"><span>488062765</span></td><td class="u"><span>CD FAS</span></td></tr><tr><td class="n"><span>1234578</span></td><td class="u"><span>JACK</span></td><td class="u"><span>SANTOS OLIVARES</span></td><td class="m"><span>Male</span></td><td class="c"><span>Montenegro</span></td><td class="p"><span>P0367034</span></td><td class="u"><span>SANTA TECLA FUTBOL CLUB</span></td></tr><tr><td class="n"><span>1234579</span></td><td class="u"><span>JACK</span></td><td class="u"><span>PEREZ PETIT</span></td><td class="m"><span>Male</span></td><td class="c"><span>Serbia</span></td><td class="p"><span>PP5715238</span></td><td class="u"><span>VERDES FOOTBALL CLUB</span></td></tr><tr><td class="n"><span>1234580</span></td><td class="u"><span>JACK</span></td><td class="u"><span>CARABALLO DELGADO</span></td><td class="m"><span>Male</span></td><td class="c"><span>Australia</span></td><td class="p"><span>P0268334</span></td><td class="u"><span>FLORIDA RUSH SOCCER CLUB</span></td></tr><tr><td class="n"><span>1234581</span></td><td class="u"><span>JACK</span></td><td class="u"><span>VALLADARES GARCIA</span></td><td class="m"><span>Male</span></td><td class="c"><span>Croatia</span></td><td class="p"><span>PA0612694</span></td><td class="u"><span>WATERHOUSE FC</span></td></tr><tr><td class="n"><span>1234582</span></td><td class="u"><span>JACK</span></td><td class="u"><span>VILLALTA HERNANDEZ</span></td><td class="m"><span>Male</span></td><td class="c"><span>Albania</span></td><td class="p"><span>YC311289</span></td><td class="u"><span>ALIANZA FUTBOL CLUB</span></td></tr><tr><td class="n"><span>1234583</span></td><td class="u"><span>JACK</span></td><td class="u"><span>NOVOA ALFARO</span></td><td class="m"><span>Male</span></td><td class="c"><span>Germany</span></td><td class="p"><span>PA0456516</span></td><td class="u"><span>CLUB DEPORTIVO ATLETICO MARTE</span></td></tr><tr><td class="n"><span>1234584</span></td><td class="u"><span>JACK</span></td><td class="u"><span>CORNEJO RIVAS</span></td><td class="m"><span>Male</span></td><td class="c"><span>Italy</span></td><td class="p"><span>HP656296</span></td><td class="u"><span>SANTA TECLA FUTBOL CLUB</span></td></tr><tr><td class="n"><span>1234585</span></td><td class="u"><span>JACK</span></td><td class="u"><span>CRESPIN AGUILAR</span></td><td class="m"><span>Male</span></td><td class="c"><span>Colombia</span></td><td class="p"><span>C01889100</span></td><td class="u"><span>CLUB DEPORTIVO ATLETICO MARTE</span></td></tr><tr><td class="n"><span>1234586</span></td><td class="u"><span>JACK</span></td><td class="u"><span>CHEVEZ GARCIA</span></td><td class="m"><span>Male</span></td><td class="c"><span>Argentina</span></td><td class="p e"><span>305069985</span></td><td class="u"><span>VERDES FOOTBALL CLUB</span></td></tr><tr><td class="n"><span>1234587</span></td><td class="u"><span>JACK</span></td><td class="u"><span>GUEVARA SOMOZA</span></td><td class="m"><span>Male</span></td><td class="c"><span>Venezuela</span></td><td class="p e"><span>331277697</span></td><td class="u"><span>CLUB DEPORTIVO ATLETICO MARTE</span></td></tr><tr><td class="n"><span>1234588</span></td><td class="u"><span>JACK</span></td><td class="u"><span>HERNANDEZ ZAVALA</span></td><td class="m"><span>Male</span></td><td class="c"><span>El Salvador</span></td><td class="p"><span>0101-1993-04074</span></td><td class="u"><span>WATERHOUSE FC</span></td></tr><tr><td class="n"><span>1234589</span></td><td class="u"><span>JACK</span></td><td class="u"><span>SANCHEZ GARCIA</span></td><td class="m"><span>Male</span></td><td class="u"><span>USA</span></td><td class="p"><span>1807-2004-01310</span></td><td class="u"><span>SANTA TECLA FUTBOL CLUB</span></td></tr><tr><td class="n"><span>1234590</span></td><td class="u"><span>JACK</span></td><td class="u"><span>CAICEDO BARRERA</span></td><td class="m"><span>Male</span></td><td class="c"><span>France</span></td><td class="p"><span>R0299419</span></td><td class="u"><span>UNIVERSIDAD NACIONAL</span></td></tr><tr><td class="n"><span>1234591</span></td><td class="u"><span>JACK</span></td><td class="u"><span>LOPEZ MARTINEZ</span></td><td class="m"><span>Male</span></td><td class="u"><span>UK</span></td><td class="p"><span>R0264179</span></td><td class="u"><span>CLUB DEPORTIVO ATLETICO MARTE</span></td></tr><tr><td class="n"><span>1234592</span></td><td class="u"><span>JACK</span></td><td class="u"><span>AGUILAR MORALES</span></td><td class="m"><span>Male</span></td><td class="c"><span>Montenegro</span></td><td class="p"><span>R0257827</span></td><td class="u"><span>ASOCIACION DEPORTIVA ISIDRO METAPAN</span></td></tr><tr><td class="n"><span>1234593</span></td><td class="u"><span>JACK</span></td><td class="u"><span>GUARDADO GIRON</span></td><td class="m"><span>Male</span></td><td class="c"><span>Serbia</span></td><td class="p"><span>RO296155</span></td><td class="u"><span>ONCE DEPORTIVO FUTBOL CLUB</span></td></tr><tr><td class="n"><span>1234594</span></td><td class="u"><span>JANE</span></td><td class="u"><span>AVELAR TROYA</span></td><td class="m"><span>Female</span></td><td class="c"><span>Australia</span></td><td class="p"><span>R0279003</span></td><td class="u"><span>ALIANZA FUTBOL CLUB</span></td></tr><tr><td class="n"><span>1234595</span></td><td class="u"><span>JANE</span></td><td class="u"><span>MENDOZA RINCAN</span></td><td class="m"><span>Female</span></td><td class="c"><span>Croatia</span></td><td class="p"><span>R0280999</span></td><td class="u"><span>WATERHOUSE FC</span></td></tr><tr><td class="n"><span>1234596</span></td><td class="u"><span>JANE</span></td><td class="u"><span>AGUIRRE HERRERA</span></td><td class="m"><span>Female</span></td><td class="c"><span>Albania</span></td><td class="p"><span>R0277756</span></td><td class="u"><span>ONCE DEPORTIVO FUTBOL CLUB</span></td></tr><tr><td class="n"><span>1234597</span></td><td class="u"><span>JANE</span></td><td class="u"><span>VASQUEZ ALVARADO</span></td><td class="m"><span>Female</span></td><td class="c"><span>Germany</span></td><td class="p"><span>12CR50303</span></td><td class="u"><span>CD LUIS ANGEL FIRPO</span></td></tr><tr><td class="n"><span>1234598</span></td><td class="u"><span>JANE</span></td><td class="u"><span>ESCALANTE MARTINEZ</span></td><td class="m"><span>Female</span></td><td class="c"><span>Italy</span></td><td class="p"><span>17DF66612</span></td><td class="u"><span>CD LUIS ANGEL FIRPO</span></td></tr><tr><td class="n"><span>1234599</span></td><td class="u"><span>JANE</span></td><td class="u"><span>GOMEZ LIMA</span></td><td class="m"><span>Female</span></td><td class="c"><span>Colombia</span></td><td class="p"><span>HP652182</span></td><td class="u"><span>VERDES FOOTBALL CLUB</span></td></tr><tr><td class="n"><span>1234600</span></td><td class="u"><span>JANE</span></td><td class="u"><span>DRIOTIS YANES</span></td><td class="m"><span>Female</span></td><td class="c"><span>Argentina</span></td><td class="p"><span>NP4646725</span></td><td class="u"><span>ONCE DEPORTIVO FUTBOL CLUB</span></td></tr><tr><td class="n"><span>1234601</span></td><td class="u"><span>JANE</span></td><td class="u"><span>RAMIREZ IBAÑEZ</span></td><td class="m"><span>Female</span></td><td class="c"><span>Venezuela</span></td><td class="p e"><span>120916348</span></td><td class="u"><span>ALIANZA FUTBOL CLUB</span></td></tr><tr><td class="n"><span>1234602</span></td><td class="u"><span>JANE</span></td><td class="u"><span>JACOBO NUÑEZ</span></td><td class="m"><span>Female</span></td><td class="c"><span>El Salvador</span></td><td class="p"><span>05546760-5</span></td><td class="u"><span>VERDES FOOTBALL CLUB</span></td></tr><tr><td class="n"><span>1234603</span></td><td class="u"><span>JANE</span></td><td class="u"><span>MORAN GIRON</span></td><td class="m"><span>Female</span></td><td class="u"><span>USA</span></td><td class="p"><span>04839263-7</span></td><td class="u"><span>WATERHOUSE FC</span></td></tr><tr><td class="n"><span>1234604</span></td><td class="u"><span>JACK</span></td><td class="u"><span>ZARCEÑO FLORES</span></td><td class="m"><span>Male</span></td><td class="c"><span>France</span></td><td class="p"><span>05974057-6</span></td><td class="u"><span>ONCE DEPORTIVO FUTBOL CLUB</span></td></tr></table><div style="position:absolute;left:1px;top:968px;width:1916px;height:29px;background:#e6e6e6;border-top:1px solid #a0a0a0;border-bottom:1px solid #c0c0c0"></div><div style="position:absolute;left:1px;top:997px;width:1916px;height:11px;background:#f1f1f1"></div><svg style="left:25px;top:978px" width="6" height="8"><path d="M5 0V8L0 4Z" fill="#c6c6c6"/></svg><svg style="left:53px;top:978px" width="6" height="8"><path d="M0 0V8L5 4Z" fill="#c6c6c6"/></svg><div style="position:absolute;left:98px;top:969px;width:54px;height:24px;background:#fff;border-bottom:2px solid #217346;border-left:1px solid #c6c6c6;border-right:1px solid #c6c6c6"></div><div class="ui" style="left:98.0px;top:974px;width:54px;text-align:center;color:#217346;font-weight:bold;font-size:13px;line-height:16px">Data</div><div class="ui" style="left:152.0px;top:974px;width:90px;text-align:center;color:#444;font-size:12.5px;line-height:16px">Parameters</div><div style="position:absolute;left:243px;top:973px;width:1px;height:19px;background:#ababab"></div><svg style="left:277px;top:974px" width="16" height="16" viewBox="0 0 16 16"><circle cx="8" cy="8" r="7" fill="none" stroke="#8a8a8a" stroke-width="1.2"/><path d="M4.5 8H11.5M8 4.5V11.5" stroke="#777" stroke-width="1.5"/></svg><div style="position:absolute;left:1150px;top:977px;width:2px;height:2px;background:#ababab"></div><div style="position:absolute;left:1150px;top:981px;width:2px;height:2px;background:#ababab"></div><div style="position:absolute;left:1150px;top:985px;width:2px;height:2px;background:#ababab"></div><div style="position:absolute;left:1167px;top:975px;width:140px;height:15px;background:#fff;border:1px solid #ababab"></div><div style="position:absolute;left:1181px;top:975px;width:1px;height:15px;background:#ababab"></div><svg style="left:1171px;top:979px" width="5" height="7"><path d="M5 0V7L0 3.5Z" fill="#555"/></svg><div class="ui" style="left:6px;top:1001px;color:#444;font-size:11px;line-height:14px;letter-spacing:-0.2px">Ready</div><div style="position:absolute;left:1626px;top:1001px;width:38px;height:7px;background:#c6c6c6"></div><div style="position:absolute;left:1638px;top:1001px;width:13px;height:7px;border-left:1px solid #666;border-right:1px solid #666;border-bottom:0"></div><div style="position:absolute;left:1642px;top:1001px;width:1px;height:7px;background:#666"></div><div style="position:absolute;left:1646px;top:1001px;width:1px;height:7px;background:#666"></div><div style="position:absolute;left:1638px;top:1005px;width:13px;height:1px;background:#666"></div><div style="position:absolute;left:1676px;top:1001px;width:14px;height:7px;border:1px solid #666;border-top:0;border-bottom:0"></div><div style="position:absolute;left:1680px;top:1004px;width:6px;height:1px;background:#666"></div><div style="position:absolute;left:1680px;top:1006px;width:6px;height:1px;background:#666"></div><div style="position:absolute;left:1714px;top:1001px;width:14px;height:5px;border:1px solid #666;border-top:0"></div><div style="position:absolute;left:1720px;top:1001px;width:1px;height:5px;background:#666"></div><div style="position:absolute;left:1745px;top:1006px;width:6px;height:2px;background:#555"></div><div style="position:absolute;left:1755px;top:1006px;width:100px;height:1px;background:#9b9b9b"></div><div style="position:absolute;left:1803px;top:1001px;width:4px;height:7px;background:#555"></div><div style="position:absolute;left:1859px;top:1006px;width:8px;height:2px;background:#555"></div><div style="position:absolute;left:1862px;top:1003px;width:2px;height:5px;background:#555"></div><div class="ui" style="left:1883px;top:1003px;color:#444;font-size:11.5px;line-height:12px">100%</div><div style="position:absolute;left:18px;top:191px;width:1111px;height:780px;border:5px solid #ed1c24"></div>
<div style="position:absolute;left:1279px;top:3px;width:6px;height:998px;background:linear-gradient(to right,rgba(0,0,0,0),rgba(0,0,0,0.22))"></div><div style="position:absolute;left:1285px;top:1001px;width:632px;height:6px;background:linear-gradient(to bottom,rgba(0,0,0,0.28),rgba(0,0,0,0))"></div><div style="position:absolute;left:1279px;top:1001px;width:6px;height:6px;background:radial-gradient(circle at 100% 0,rgba(0,0,0,0.25),rgba(0,0,0,0) 6px)"></div><div style="position:absolute;left:1284px;top:3px;width:633px;height:998px;background:#f1f1f1;border-left:1px solid #217346;border-bottom:1px solid #217346"></div><div style="position:absolute;left:1284px;top:3px;width:633px;height:33px;background:#217346"></div><div style="position:absolute;left:1287px;top:12px"><div class="ui" style="left:-23.0px;top:5px;width:100px;text-align:center;color:#fff;font-size:11.8px">File</div><div style="position:absolute;left:61px;top:0px;width:60px;height:25px;background:#f1f1f1"></div><div class="ui" style="left:51.0px;top:5px;width:80px;text-align:center;color:#217346;font-size:11.8px">Home</div><div class="ui" style="left:100.0px;top:5px;width:100px;text-align:center;color:#fff;font-size:11.8px">Insert</div><div class="ui" style="left:176.0px;top:5px;width:100px;text-align:center;color:#fff;font-size:11.8px">Page Layout</div><div class="ui" style="left:262.0px;top:5px;width:100px;text-align:center;color:#fff;font-size:11.8px">Formulas</div><div class="ui" style="left:327.0px;top:5px;width:100px;text-align:center;color:#fff;font-size:11.8px">Data</div><div class="ui" style="left:387.0px;top:5px;width:100px;text-align:center;color:#fff;font-size:11.8px">Review</div><div class="ui" style="left:447.0px;top:5px;width:100px;text-align:center;color:#fff;font-size:11.8px">View</div><div class="ui" style="left:520.0px;top:5px;width:100px;text-align:center;color:#fff;font-size:11.8px">Power Pivot</div></div><div style="position:absolute;left:1285px;top:36px;width:632px;height:93px;background:#f1f1f1;border-bottom:1px solid #d2d2d2"></div><svg style="left:1297px;top:43px" width="30" height="32" viewBox="0 0 30 32"><rect x="1" y="3.8" width="24" height="25" rx="1.5" fill="#d9d6d9"/><rect x="6" y="4" width="14" height="4" fill="#bcbabc"/><path d="M10 4V2.5a1.5 1.5 0 0 1 1.5-1.5h3a1.5 1.5 0 0 1 1.5 1.5V4Z" fill="#bcbabc"/><rect x="12" y="2" width="2" height="2" fill="#f1f1f1"/><path d="M15.5 12.5H24L28.5 17V30.5H15.5Z" fill="#f6f2f6" stroke="#c4c2c4"/><path d="M24 12.5V17H28.5" fill="none" stroke="#c4c2c4"/></svg><div class="ui" style="left:1285.0px;top:78px;width:50px;text-align:center;color:#8a8a8a;letter-spacing:-0.5px">Paste</div><div class="dd" style="left:1307px;top:99px;border-top-color:#b0b0b0"></div><svg style="left:1334px;top:42px" width="16" height="16" viewBox="0 0 16 16"><path d="M3.8 0.5L9.8 10M12.2 0.5L6.2 10" stroke="#4f4f4f" stroke-width="2" fill="none"/><circle cx="3.7" cy="12" r="2.3" fill="#f1f1f1" stroke="#3e7fc1" stroke-width="1.2"/><circle cx="12.3" cy="12" r="2.3" fill="#f1f1f1" stroke="#3e7fc1" stroke-width="1.2"/></svg><svg style="left:1333px;top:65px" width="16" height="15" viewBox="0 0 16 15"><path d="M0.5 0.5H5L7.5 3V9.5H0.5Z" fill="#fff" stroke="#666"/><path d="M2 3.5H5M2 5.5H5M2 7.5H4" stroke="#3e7fc1"/><path d="M6.5 4.5H11.5L14.5 7.5V14.5H6.5Z" fill="#fff" stroke="#666"/><path d="M11.5 4.5V7.5H14.5" fill="none" stroke="#666"/><path d="M8 8.5H11M8 10.5H13M8 12.5H13" stroke="#3e7fc1"/></svg><div class="dd" style="left:1355px;top:72px;border-top-color:#666"></div><svg style="left:1333px;top:88px" width="17" height="16" viewBox="0 0 17 16"><path d="M0 6L8 4L11 9L6 14Z" fill="#e8b96a"/><path d="M7 3.5L11 1L14.5 6.5L10.5 9.5Z" fill="#666"/><path d="M12 2.5L15 0.5L16.5 2.5L13.5 4.5Z" fill="#666"/></svg><div class="ui" style="left:1294px;top:114px;color:#666">Clipboard</div><svg style="left:1358px;top:117px" width="8" height="8" viewBox="0 0 8 8"><path d="M0.5 5V0.5H5" fill="none" stroke="#777" stroke-width="1"/><path d="M3 3L6.5 6.5" stroke="#777" stroke-width="1"/><path d="M7.5 3.5V7.5H3.5Z" fill="#777"/></svg><div class="gsep" style="left:1370px;top:40px;height:84px"></div><div class="box" style="position:absolute;left:1375px;top:47px;width:111px;height:23px;"></div><div class="ui" style="left:1378px;top:52px;color:#333;font-size:11.6px">Calibri</div><div class="dd" style="left:1475px;top:57px;border-top-color:#666"></div><div class="box" style="position:absolute;left:1485px;top:47px;width:44px;height:23px;"></div><div class="ui" style="left:1488px;top:52px;color:#333;font-size:11.8px">11</div><div class="dd" style="left:1518px;top:57px;border-top-color:#666"></div><svg style="left:1533px;top:50px" width="20" height="18" viewBox="0 0 20 18"><text x="2" y="14" font-family="Liberation Sans,sans-serif" font-size="14.5" fill="#505050">A</text><path d="M11 4.2L13.5 1L16 4.2Z" fill="#3e7fc1"/></svg><svg style="left:1556px;top:50px" width="20" height="18" viewBox="0 0 20 18"><text x="2.5" y="14" font-family="Liberation Sans,sans-serif" font-size="11.5" fill="#505050">A</text><path d="M10 1.2H15.4L12.7 4.4Z" fill="#3e7fc1"/></svg><div class="ui" style="left:1382px;top:81px;font-weight:bold;font-size:12.5px;color:#444;line-height:16px">B</div><div class="ui" style="left:1405px;top:81px;font-style:italic;font-family:'Liberation Serif',serif;font-weight:bold;font-size:15px;color:#444;line-height:16px">I</div><div class="ui" style="left:1425px;top:81px;text-decoration:underline;font-size:12.5px;font-weight:bold;color:#444;line-height:16px">U</div><div class="dd" style="left:1443px;top:88px;border-top-color:#666"></div><div class="vsep" style="left:1457px;top:78px;height:22px"></div><svg style="left:1466px;top:82px" width="13" height="13" viewBox="0 0 13 13"><rect x="0" y="0" width="13" height="13" fill="#fff"/><rect x="0" y="0" width="1" height="1" fill="#6a6a6a"/><rect x="0" y="6" width="1" height="1" fill="#6a6a6a"/><rect x="2" y="0" width="1" height="1" fill="#6a6a6a"/><rect x="2" y="6" width="1" height="1" fill="#6a6a6a"/><rect x="4" y="0" width="1" height="1" fill="#6a6a6a"/><rect x="4" y="6" width="1" height="1" fill="#6a6a6a"/><rect x="6" y="0" width="1" height="1" fill="#6a6a6a"/><rect x="6" y="6" width="1" height="1" fill="#6a6a6a"/><rect x="8" y="0" width="1" height="1" fill="#6a6a6a"/><rect x="8" y="6" width="1" height="1" fill="#6a6a6a"/><rect x="10" y="0" width="1" height="1" fill="#6a6a6a"/><rect x="10" y="6" width="1" height="1" fill="#6a6a6a"/><rect x="12" y="0" width="1" height="1" fill="#6a6a6a"/><rect x="12" y="6" width="1" height="1" fill="#6a6a6a"/><rect x="0" y="2" width="1" height="1" fill="#6a6a6a"/><rect x="6" y="2" width="1" height="1" fill="#6a6a6a"/><rect x="12" y="2" width="1" height="1" fill="#6a6a6a"/><rect x="0" y="4" width="1" height="1" fill="#6a6a6a"/><rect x="6" y="4" width="1" height="1" fill="#6a6a6a"/><rect x="12" y="4" width="1" height="1" fill="#6a6a6a"/><rect x="0" y="6" width="1" height="1" fill="#6a6a6a"/><rect x="6" y="6" width="1" height="1" fill="#6a6a6a"/><rect x="12" y="6" width="1" height="1" fill="#6a6a6a"/><rect x="0" y="8" width="1" height="1" fill="#6a6a6a"/><rect x="6" y="8" width="1" height="1" fill="#6a6a6a"/><rect x="12" y="8" width="1" height="1" fill="#6a6a6a"/><rect x="0" y="10" width="1" height="1" fill="#6a6a6a"/><rect x="6" y="10" width="1" height="1" fill="#6a6a6a"/><rect x="12" y="10" width="1" height="1" fill="#6a6a6a"/><rect x="0" y="12" width="13" height="1" fill="#555"/></svg><div class="dd" style="left:1486px;top:88px;border-top-color:#666"></div><div class="vsep" style="left:1500px;top:78px;height:22px"></div><svg style="left:1507px;top:80px" width="18" height="18" viewBox="0 0 18 18"><path d="M9 3L14.7 7.9L8.6 13.2L3.2 8.5Z" fill="#fff" stroke="#555" stroke-width="1.1" stroke-linejoin="round"/><path d="M6.7 5.3V1.7H9.6V6.6" fill="none" stroke="#555" stroke-width="1.1"/><path d="M13 4.6C16 5 18 7.5 17 10C16.5 11.2 15.5 12 14.2 12.4C14.8 10.5 15 9.5 14.9 8Z" fill="#3e7fc1"/><rect x="1" y="13" width="16" height="4" fill="#ffff00"/></svg><div class="dd" style="left:1529px;top:88px;border-top-color:#666"></div><svg style="left:1541px;top:81px" width="18" height="18" viewBox="0 0 18 18"><text x="9" y="12" text-anchor="middle" font-family="Liberation Sans,sans-serif" font-size="14.5" fill="#505050">A</text><rect x="1" y="12" width="16" height="4" fill="#ff0000"/></svg><div class="dd" style="left:1563px;top:88px;border-top-color:#666"></div><div class="lbl" style="left:1436.0px;top:114px;width:60px;text-align:center;">Font</div><svg style="left:1565px;top:117px" width="8" height="8" viewBox="0 0 8 8"><path d="M0.5 5V0.5H5" fill="none" stroke="#777" stroke-width="1"/><path d="M3 3L6.5 6.5" stroke="#777" stroke-width="1"/><path d="M7.5 3.5V7.5H3.5Z" fill="#777"/></svg><div class="gsep" style="left:1577px;top:40px;height:84px"></div><div class="hl" style="position:absolute;left:1604px;top:47px;width:22px;height:23px;"></div><svg style="left:1586px;top:49px" width="14" height="18" viewBox="0 0 14 18"><rect x="0" y="1" width="14" height="1" fill="#6a6a6a"/><rect x="1" y="4" width="12" height="1" fill="#6a6a6a"/><rect x="0" y="7" width="14" height="1" fill="#6a6a6a"/></svg><svg style="left:1608px;top:49px" width="14" height="18" viewBox="0 0 14 18"><rect x="0" y="5" width="14" height="1" fill="#6a6a6a"/><rect x="1" y="8" width="12" height="1" fill="#6a6a6a"/><rect x="0" y="11" width="14" height="1" fill="#6a6a6a"/></svg><svg style="left:1630px;top:49px" width="14" height="18" viewBox="0 0 14 18"><rect x="0" y="10" width="14" height="1" fill="#6a6a6a"/><rect x="1" y="13" width="12" height="1" fill="#6a6a6a"/><rect x="0" y="16" width="14" height="1" fill="#6a6a6a"/></svg><div class="vsep" style="left:1652px;top:47px;height:22px"></div><svg style="left:1658px;top:49px" width="20" height="18" viewBox="0 0 20 18"><text x="0" y="0" transform="translate(3.2,11.2) rotate(-45)" font-family="Liberation Sans,sans-serif" font-size="11" fill="#505050">ab</text><path d="M8.5 15.6L17.2 6.7" stroke="#555" stroke-width="1.2"/><path d="M13.6 6.4H17.5V10.3" fill="none" stroke="#555" stroke-width="1.2"/></svg><div class="dd" style="left:1679px;top:57px;border-top-color:#666"></div><div class="vsep" style="left:1705px;top:46px;height:55px"></div><div class="hl" style="position:absolute;left:1710px;top:47px;width:81px;height:23px;"></div><svg style="left:1713px;top:49px" width="18" height="18" viewBox="0 0 18 18"><rect x="0.5" y="1.5" width="9" height="4" fill="#fff" stroke="#6a6a6a"/><rect x="0.5" y="8.5" width="9" height="7" fill="#fff" stroke="#6a6a6a"/><path d="M2 3.5H14" stroke="#3e7fc1" stroke-width="1"/><path d="M2 10.5H8M2 12.5H8" stroke="#3e7fc1" stroke-width="1"/><path d="M15 5.5c1 2.2-.5 4.6-4.2 4.2" fill="none" stroke="#3e7fc1" stroke-width="1.4"/><path d="M12.8 7.2L10.2 9.7L13.4 11.6" fill="none" stroke="#3e7fc1" stroke-width="1.4"/></svg><div class="ui" style="left:1732px;top:52px;color:#444">Wrap Text</div><div class="hl" style="position:absolute;left:1582px;top:78px;width:22px;height:23px;"></div><svg style="left:1586px;top:80px" width="14" height="18" viewBox="0 0 14 18"><rect x="0" y="4" width="14" height="1" fill="#6a6a6a"/><rect x="0" y="7" width="10" height="1" fill="#6a6a6a"/><rect x="0" y="10" width="14" height="1" fill="#6a6a6a"/><rect x="0" y="13" width="10" height="1" fill="#6a6a6a"/></svg><svg style="left:1608px;top:80px" width="14" height="18" viewBox="0 0 14 18"><rect x="0.0" y="4" width="14" height="1" fill="#6a6a6a"/><rect x="2.0" y="7" width="10" height="1" fill="#6a6a6a"/><rect x="0.0" y="10" width="14" height="1" fill="#6a6a6a"/><rect x="2.0" y="13" width="10" height="1" fill="#6a6a6a"/></svg><svg style="left:1630px;top:80px" width="14" height="18" viewBox="0 0 14 18"><rect x="0" y="4" width="14" height="1" fill="#6a6a6a"/><rect x="4" y="7" width="10" height="1" fill="#6a6a6a"/><rect x="0" y="10" width="14" height="1" fill="#6a6a6a"/><rect x="4" y="13" width="10" height="1" fill="#6a6a6a"/></svg><div class="vsep" style="left:1652px;top:78px;height:22px"></div><svg style="left:1660px;top:81px" width="16" height="15" viewBox="0 0 16 15"><rect x="0" y="1" width="16" height="1" fill="#6a6a6a"/><rect x="0" y="13" width="16" height="1" fill="#6a6a6a"/><rect x="8" y="4" width="8" height="1" fill="#6a6a6a"/><rect x="8" y="7" width="8" height="1" fill="#6a6a6a"/><rect x="8" y="10" width="8" height="1" fill="#6a6a6a"/><path d="M7 7.5H1.2M4 4.5L1 7.5L4 10.5" fill="none" stroke="#3e7fc1" stroke-width="1.8"/></svg><svg style="left:1682px;top:81px" width="16" height="15" viewBox="0 0 16 15"><rect x="0" y="1" width="16" height="1" fill="#6a6a6a"/><rect x="0" y="13" width="16" height="1" fill="#6a6a6a"/><rect x="8" y="4" width="8" height="1" fill="#6a6a6a"/><rect x="8" y="7" width="8" height="1" fill="#6a6a6a"/><rect x="8" y="10" width="8" height="1" fill="#6a6a6a"/><path d="M0 7.5H5.8M3 4.5L6 7.5L3 10.5" fill="none" stroke="#3e7fc1" stroke-width="1.8"/></svg><svg style="left:1713px;top:81px" width="15" height="15" viewBox="0 0 15 15"><rect x="0.5" y="0.5" width="14" height="14" fill="#fff" stroke="#6a6a6a"/><path d="M0.5 3.5H14.5M0.5 11.5H14.5M7.5 0.5V3.5M7.5 11.5V14.5" stroke="#6a6a6a"/><path d="M2.5 7.5H12.5" fill="none" stroke="#3e7fc1" stroke-width="1"/><path d="M4.8 5.5L2.3 7.5L4.8 9.5ZM10.2 5.5L12.7 7.5L10.2 9.5Z" fill="#3e7fc1"/></svg><div class="ui" style="left:1732px;top:83px;color:#444">Merge &amp; Center</div><div class="dd" style="left:1826px;top:88px;border-top-color:#666"></div><div class="lbl" style="left:1661.0px;top:114px;width:80px;text-align:center;">Alignment</div><svg style="left:1829px;top:117px" width="8" height="8" viewBox="0 0 8 8"><path d="M0.5 5V0.5H5" fill="none" stroke="#777" stroke-width="1"/><path d="M3 3L6.5 6.5" stroke="#777" stroke-width="1"/><path d="M7.5 3.5V7.5H3.5Z" fill="#777"/></svg><div class="gsep" style="left:1841px;top:40px;height:84px"></div><div class="box" style="position:absolute;left:1846px;top:47px;width:131px;height:23px;"></div><div class="ui" style="left:1849px;top:52px;color:#333;font-size:11.5px">General</div><div class="dd" style="left:1966px;top:57px;border-top-color:#666"></div><svg style="left:1849px;top:81px" width="18" height="18" viewBox="0 0 18 18"><rect x="0" y="0" width="16" height="9" fill="#3e7fc1"/><path d="M1.5 3a1.5 1.5 0 0 0 1.5-1.5H13a1.5 1.5 0 0 0 1.5 1.5V6a1.5 1.5 0 0 0-1.5 1.5H3A1.5 1.5 0 0 0 1.5 6Z" fill="#fff"/><circle cx="8" cy="4.5" r="2.1" fill="#3e7fc1"/><path d="M8 4.5H10.5V3Z" fill="#fff"/><rect x="8.5" y="5.5" width="8" height="8" fill="#f1f1f1"/><rect x="9" y="6" width="7" height="1.3" rx="0.65" fill="#e8b96a"/><rect x="9" y="8" width="7" height="1.3" rx="0.65" fill="#e8b96a"/><rect x="9" y="10" width="7" height="1.3" rx="0.65" fill="#e8b96a"/><rect x="9" y="12" width="7" height="1.3" rx="0.65" fill="#e8b96a"/><rect x="3.5" y="10.2" width="8.5" height="6" fill="#f1f1f1"/><rect x="4" y="10.8" width="7.5" height="1.3" rx="0.65" fill="#e8b96a"/><rect x="4" y="12.8" width="7.5" height="1.3" rx="0.65" fill="#e8b96a"/><rect x="4" y="14.8" width="7.5" height="1.3" rx="0.65" fill="#e8b96a"/></svg><div class="dd" style="left:1870px;top:88px;border-top-color:#666"></div><div class="ui" style="left:1884px;top:81px;font-size:15.5px;color:#444;line-height:18px">%</div><div class="ui" style="left:1909px;top:74px;font-size:19px;font-weight:bold;font-family:'Liberation Serif',serif;color:#444;line-height:18px">,</div><div class="vsep" style="left:1928px;top:78px;height:22px"></div><svg style="left:1936px;top:81px" width="16" height="15" viewBox="0 0 16 15"><path d="M7 4.5H1.2M3.5 2L1 4.5L3.5 7" fill="none" stroke="#3e7fc1" stroke-width="1.3"/><text x="6.5" y="6.5" font-family="Liberation Sans,sans-serif" font-size="8.5" fill="#505050">.0</text><text x="2" y="14" font-family="Liberation Sans,sans-serif" font-size="8.5" fill="#505050">.00</text></svg><svg style="left:1958px;top:81px" width="16" height="15" viewBox="0 0 16 15"><text x="2.5" y="6.5" font-family="Liberation Sans,sans-serif" font-size="8.5" fill="#505050">.00</text><path d="M0 11.5H6M3.5 9L6 11.5L3.5 14" fill="none" stroke="#3e7fc1" stroke-width="1.3"/><text x="7.3" y="14" font-family="Liberation Sans,sans-serif" font-size="8.5" fill="#505050">.0</text></svg><div class="lbl" style="left:1864.0px;top:114px;width:80px;text-align:center;">Number</div><svg style="left:1970px;top:117px" width="8" height="8" viewBox="0 0 8 8"><path d="M0.5 5V0.5H5" fill="none" stroke="#777" stroke-width="1"/><path d="M3 3L6.5 6.5" stroke="#777" stroke-width="1"/><path d="M7.5 3.5V7.5H3.5Z" fill="#777"/></svg><div style="position:absolute;left:1285px;top:129px;width:632px;height:66px;background:#e6e6e6"></div><div class="box" style="position:absolute;left:1290px;top:139px;width:102px;height:26px;"></div><div class="ui" style="left:1297px;top:146px;color:#333;font-size:12.3px">E34</div><svg style="left:1377px;top:150px" width="8" height="4"><path d="M0 0H7.5L3.75 4Z" fill="#555"/></svg><div style="position:absolute;left:1406px;top:147px;width:2px;height:2px;background:#ababab"></div><div style="position:absolute;left:1406px;top:151px;width:2px;height:2px;background:#ababab"></div><div style="position:absolute;left:1406px;top:155px;width:2px;height:2px;background:#ababab"></div><div class="box" style="position:absolute;left:1422px;top:139px;width:110px;height:26px;"></div><svg style="left:1435px;top:146px" width="12" height="12" viewBox="0 0 12 12"><path d="M1 1L10.5 10.5M10.5 1L1 10.5" stroke="#b0b0b0" stroke-width="1.7"/></svg><svg style="left:1470px;top:146px" width="14" height="12" viewBox="0 0 14 12"><path d="M1 6L4.5 10L12.5 1.5" fill="none" stroke="#bcbcbc" stroke-width="2.3"/></svg><div class="ui" style="left:1507px;top:143px;font-family:'Liberation Serif',serif;font-style:italic;font-weight:bold;font-size:16px;color:#555;line-height:18px">f</div><div class="ui" style="left:1513px;top:148px;font-family:'Liberation Serif',serif;font-style:italic;font-weight:bold;font-size:11px;color:#555;line-height:12px">x</div><div class="box" style="position:absolute;left:1535px;top:139px;width:400px;height:26px;"></div><div style="position:absolute;left:1544px;top:136px;font-size:21px;line-height:32px;font-weight:bold;color:#ed1c24;white-space:nowrap;letter-spacing:0px">Person identification documents</div><div style="position:absolute;left:1285px;top:195px;width:632px;height:756px;background:#fff"></div><div style="position:absolute;left:1285px;top:195px;width:25px;height:756px;background:#e6e6e6"></div><svg style="left:1295px;top:181px" width="12" height="10"><path d="M12 0V10H0Z" fill="#b3b3b3"/></svg><div style="position:absolute;left:1695px;top:175px;width:104px;height:19px;background:#d2d2d2"></div><div style="position:absolute;left:1310px;top:175px;width:1px;height:18px;background:#c3c3c3"></div><div style="position:absolute;left:1379px;top:175px;width:1px;height:18px;background:#c3c3c3"></div><div style="position:absolute;left:1484px;top:175px;width:1px;height:18px;background:#c3c3c3"></div><div style="position:absolute;left:1589px;top:175px;width:1px;height:18px;background:#c3c3c3"></div><div style="position:absolute;left:1694px;top:175px;width:1px;height:18px;background:#c3c3c3"></div><div style="position:absolute;left:1799px;top:175px;width:1px;height:18px;background:#c3c3c3"></div><div style="position:absolute;left:1904px;top:175px;width:1px;height:18px;background:#c3c3c3"></div><div style="position:absolute;left:1285px;top:194px;width:632px;height:1px;background:#ababab"></div><div style="position:absolute;left:1695px;top:193px;width:104px;height:2px;background:#217346"></div><div class="ch" style="left:1325.0px;top:178px;width:40px;">A</div><div class="ch" style="left:1412.0px;top:178px;width:40px;">B</div><div class="ch" style="left:1517.0px;top:178px;width:40px;">C</div><div class="ch" style="left:1622.0px;top:178px;width:40px;">D</div><div class="ch" style="left:1727.0px;top:178px;width:40px;color:#217346;">E</div><div class="ch" style="left:1832.0px;top:178px;width:40px;">F</div><div class="rh" style="left:1285px;top:196px;width:25px;">1</div><div style="position:absolute;left:1285px;top:214px;width:25px;height:1px;background:#9b9b9b"></div><div class="rh" style="left:1285px;top:216px;width:25px;">2</div><div style="position:absolute;left:1285px;top:234px;width:25px;height:1px;background:#c3c3c3"></div><div class="rh" style="left:1285px;top:236px;width:25px;">3</div><div style="position:absolute;left:1285px;top:254px;width:25px;height:1px;background:#c3c3c3"></div><div class="rh" style="left:1285px;top:256px;width:25px;">4</div><div style="position:absolute;left:1285px;top:274px;width:25px;height:1px;background:#c3c3c3"></div><div class="rh" style="left:1285px;top:276px;width:25px;">5</div><div style="position:absolute;left:1285px;top:294px;width:25px;height:1px;background:#c3c3c3"></div><div class="rh" style="left:1285px;top:296px;width:25px;">6</div><div style="position:absolute;left:1285px;top:314px;width:25px;height:1px;background:#c3c3c3"></div><div class="rh" style="left:1285px;top:316px;width:25px;">7</div><div style="position:absolute;left:1285px;top:334px;width:25px;height:1px;background:#c3c3c3"></div><div class="rh" style="left:1285px;top:336px;width:25px;">8</div><div style="position:absolute;left:1285px;top:354px;width:25px;height:1px;background:#c3c3c3"></div><div class="rh" style="left:1285px;top:356px;width:25px;">9</div><div style="position:absolute;left:1285px;top:374px;width:25px;height:1px;background:#c3c3c3"></div><div class="rh" style="left:1285px;top:376px;width:25px;">10</div><div style="position:absolute;left:1285px;top:394px;width:25px;height:1px;background:#c3c3c3"></div><div class="rh" style="left:1285px;top:396px;width:25px;">11</div><div style="position:absolute;left:1285px;top:414px;width:25px;height:1px;background:#c3c3c3"></div><div class="rh" style="left:1285px;top:416px;width:25px;">12</div><div style="position:absolute;left:1285px;top:434px;width:25px;height:1px;background:#c3c3c3"></div><div class="rh" style="left:1285px;top:436px;width:25px;">13</div><div style="position:absolute;left:1285px;top:454px;width:25px;height:1px;background:#c3c3c3"></div><div class="rh" style="left:1285px;top:456px;width:25px;">14</div><div style="position:absolute;left:1285px;top:474px;width:25px;height:1px;background:#c3c3c3"></div><div class="rh" style="left:1285px;top:476px;width:25px;">15</div><div style="position:absolute;left:1285px;top:494px;width:25px;height:1px;background:#c3c3c3"></div><div class="rh" style="left:1285px;top:496px;width:25px;">16</div><div style="position:absolute;left:1285px;top:514px;width:25px;height:1px;background:#c3c3c3"></div><div class="rh" style="left:1285px;top:516px;width:25px;">17</div><div style="position:absolute;left:1285px;top:534px;width:25px;height:1px;background:#c3c3c3"></div><div class="rh" style="left:1285px;top:536px;width:25px;">18</div><div style="position:absolute;left:1285px;top:554px;width:25px;height:1px;background:#c3c3c3"></div><div class="rh" style="left:1285px;top:556px;width:25px;">19</div><div style="position:absolute;left:1285px;top:574px;width:25px;height:1px;background:#c3c3c3"></div><div class="rh" style="left:1285px;top:576px;width:25px;">20</div><div style="position:absolute;left:1285px;top:594px;width:25px;height:1px;background:#c3c3c3"></div><div class="rh" style="left:1285px;top:596px;width:25px;">21</div><div style="position:absolute;left:1285px;top:614px;width:25px;height:1px;background:#c3c3c3"></div><div class="rh" style="left:1285px;top:616px;width:25px;">22</div><div style="position:absolute;left:1285px;top:634px;width:25px;height:1px;background:#c3c3c3"></div><div class="rh" style="left:1285px;top:636px;width:25px;">23</div><div style="position:absolute;left:1285px;top:654px;width:25px;height:1px;background:#c3c3c3"></div><div class="rh" style="left:1285px;top:656px;width:25px;">24</div><div style="position:absolute;left:1285px;top:674px;width:25px;height:1px;background:#c3c3c3"></div><div class="rh" style="left:1285px;top:676px;width:25px;">25</div><div style="position:absolute;left:1285px;top:694px;width:25px;height:1px;background:#c3c3c3"></div><div class="rh" style="left:1285px;top:696px;width:25px;">26</div><div style="position:absolute;left:1285px;top:714px;width:25px;height:1px;background:#c3c3c3"></div><div class="rh" style="left:1285px;top:716px;width:25px;">27</div><div style="position:absolute;left:1285px;top:734px;width:25px;height:1px;background:#c3c3c3"></div><div class="rh" style="left:1285px;top:736px;width:25px;">28</div><div style="position:absolute;left:1285px;top:754px;width:25px;height:1px;background:#c3c3c3"></div><div class="rh" style="left:1285px;top:756px;width:25px;">29</div><div style="position:absolute;left:1285px;top:774px;width:25px;height:1px;background:#c3c3c3"></div><div class="rh" style="left:1285px;top:776px;width:25px;">30</div><div style="position:absolute;left:1285px;top:794px;width:25px;height:1px;background:#c3c3c3"></div><div class="rh" style="left:1285px;top:796px;width:25px;">31</div><div style="position:absolute;left:1285px;top:814px;width:25px;height:1px;background:#c3c3c3"></div><div class="rh" style="left:1285px;top:816px;width:25px;">32</div><div style="position:absolute;left:1285px;top:834px;width:25px;height:1px;background:#c3c3c3"></div><div class="rh" style="left:1285px;top:836px;width:25px;">33</div><div style="position:absolute;left:1285px;top:854px;width:25px;height:1px;background:#c3c3c3"></div><div style="position:absolute;left:1285px;top:855px;width:25px;height:20px;background:#d2d2d2;border-right:2px solid #217346"></div><div class="rh" style="left:1285px;top:856px;width:25px;color:#217346;">34</div><div style="position:absolute;left:1285px;top:874px;width:25px;height:1px;background:#c3c3c3"></div><div class="rh" style="left:1285px;top:876px;width:25px;">35</div><div style="position:absolute;left:1285px;top:894px;width:25px;height:1px;background:#c3c3c3"></div><div class="rh" style="left:1285px;top:896px;width:25px;">36</div><div style="position:absolute;left:1285px;top:914px;width:25px;height:1px;background:#c3c3c3"></div><div class="rh" style="left:1285px;top:916px;width:25px;">37</div><div style="position:absolute;left:1285px;top:934px;width:25px;height:1px;background:#c3c3c3"></div><div class="rh" style="left:1285px;top:936px;width:25px;">38</div><div style="position:absolute;left:1285px;top:954px;width:25px;height:1px;background:#c3c3c3"></div><div style="position:absolute;left:0;top:0;width:1917px;height:951px;overflow:hidden"><table class="grid" style="left:1311px;top:195px;width:594px"><colgroup><col style="width:69px"><col style="width:105px"><col style="width:105px"><col style="width:105px"><col style="width:105px"><col style="width:105px"></colgroup><tr class="h"><td><span style="letter-spacing:-0.4px">Person ID</span></td><td><span>Document type</span></td><td><span>Date from</span></td><td><span>Date to</span></td><td><span>Status</span></td><td><span>Country</span></td></tr><tr><td class="n"><span>1234573</span></td><td class="m"><span>Passport</span></td><td class="d"><span></span></td><td class="d"><span>31.05.2027</span></td><td class="u"><span>ACTIVE</span></td><td class="c"><span>Croatia</span></td></tr><tr><td class="n"><span>1234596</span></td><td class="m"><span>Passport</span></td><td class="d"><span>31.05.2021</span></td><td class="d"><span>31.05.2027</span></td><td class="u"><span>ACTIVE</span></td><td class="c"><span>Albania</span></td></tr><tr><td class="n"><span>1234615</span></td><td class="m"><span>Passport</span></td><td class="d"><span>31.03.2016</span></td><td class="d"><span>31.03.2021</span></td><td class="u"><span>ACTIVE</span></td><td class="c"><span>Germany</span></td></tr><tr><td class="n"><span>1234616</span></td><td class="m"><span>Passport</span></td><td class="d"><span>31.03.2016</span></td><td class="d"><span>31.03.2021</span></td><td class="u"><span>ACTIVE</span></td><td class="c"><span>Italy</span></td></tr><tr><td class="n"><span>1234628</span></td><td class="m"><span>Passport</span></td><td class="d"><span></span></td><td class="d"><span>30.11.2021</span></td><td class="u"><span>ACTIVE</span></td><td class="c"><span>Colombia</span></td></tr><tr><td class="n"><span>1234571</span></td><td class="m"><span>Passport</span></td><td class="d"><span></span></td><td class="d"><span>30.11.2020</span></td><td class="u"><span>ACTIVE</span></td><td class="c"><span>Argentina</span></td></tr><tr><td class="n"><span>1234638</span></td><td class="m"><span>Passport</span></td><td class="d"><span></span></td><td class="d"><span>30.10.2024</span></td><td class="u"><span>ACTIVE</span></td><td class="c"><span>Venezuela</span></td></tr><tr><td class="n"><span>1234636</span></td><td class="m"><span>Passport</span></td><td class="d"><span></span></td><td class="d"><span>30.08.2026</span></td><td class="u"><span>ACTIVE</span></td><td class="c"><span>El Salvador</span></td></tr><tr><td class="n"><span>1234610</span></td><td class="m"><span>Passport</span></td><td class="d"><span></span></td><td class="d"><span>29.11.2021</span></td><td class="u"><span>ACTIVE</span></td><td class="u"><span>USA</span></td></tr><tr><td class="n"><span>1234706</span></td><td class="m"><span>Passport</span></td><td class="d"><span>28.10.2019</span></td><td class="d"><span>28.10.2029</span></td><td class="u"><span>ACTIVE</span></td><td class="c"><span>France</span></td></tr><tr><td class="n"><span>1234667</span></td><td class="m"><span>Passport</span></td><td class="d"><span></span></td><td class="d"><span>28.10.2025</span></td><td class="u"><span>ACTIVE</span></td><td class="u"><span>UK</span></td></tr><tr><td class="n"><span>1234696</span></td><td class="m"><span>Passport</span></td><td class="d"><span>29.10.2018</span></td><td class="d"><span>28.10.2024</span></td><td class="u"><span>ACTIVE</span></td><td class="c"><span>Montenegro</span></td></tr><tr><td class="n"><span>1234699</span></td><td class="m"><span>Passport</span></td><td class="d"><span>29.08.2018</span></td><td class="d"><span>28.08.2028</span></td><td class="u"><span>ACTIVE</span></td><td class="c"><span>Serbia</span></td></tr><tr><td class="n"><span>1234572</span></td><td class="m"><span>Passport</span></td><td class="d"><span></span></td><td class="d"><span>28.07.2020</span></td><td class="u"><span>INACTIVE</span></td><td class="c"><span>Australia</span></td></tr><tr><td class="n"><span>1234682</span></td><td class="m"><span>Passport</span></td><td class="d"><span></span></td><td class="d"><span>28.04.2022</span></td><td class="u"><span>ACTIVE</span></td><td class="c"><span>Croatia</span></td></tr><tr><td class="n"><span>1234679</span></td><td class="m"><span>Passport</span></td><td class="d"><span></span></td><td class="d"><span>28.02.2022</span></td><td class="u"><span>ACTIVE</span></td><td class="c"><span>Albania</span></td></tr><tr><td class="n"><span>1234630</span></td><td class="m"><span>Passport</span></td><td class="d"><span></span></td><td class="d"><span>27.09.2026</span></td><td class="u"><span>ACTIVE</span></td><td class="c"><span>Germany</span></td></tr><tr><td class="n"><span>1234599</span></td><td class="m"><span>Passport</span></td><td class="d"><span></span></td><td class="d"><span>27.06.2023</span></td><td class="u"><span>ACTIVE</span></td><td class="c"><span>Italy</span></td></tr><tr><td class="n"><span>1234614</span></td><td class="m"><span>Passport</span></td><td class="d"><span></span></td><td class="d"><span>27.05.2029</span></td><td class="u"><span>ACTIVE</span></td><td class="c"><span>Colombia</span></td></tr><tr><td class="n"><span>1234637</span></td><td class="m"><span>Passport</span></td><td class="d"><span></span></td><td class="d"><span>27.03.2023</span></td><td class="u"><span>ACTIVE</span></td><td class="c"><span>Argentina</span></td></tr><tr><td class="n"><span>1234590</span></td><td class="m"><span>Passport</span></td><td class="d"><span></span></td><td class="d"><span>27.03.2022</span></td><td class="u"><span>ACTIVE</span></td><td class="c"><span>Venezuela</span></td></tr><tr><td class="n"><span>1234623</span></td><td class="m"><span>Passport</span></td><td class="d"><span></span></td><td class="d"><span>27.02.2025</span></td><td class="u"><span>ACTIVE</span></td><td class="c"><span>El Salvador</span></td></tr><tr><td class="n"><span>1234674</span></td><td class="m"><span>Passport</span></td><td class="d"><span></span></td><td class="d"><span>26.11.2021</span></td><td class="u"><span>ACTIVE</span></td><td class="u"><span>USA</span></td></tr><tr><td class="n"><span>1234631</span></td><td class="m"><span>Passport</span></td><td class="d"><span></span></td><td class="d"><span>26.06.2023</span></td><td class="u"><span>ACTIVE</span></td><td class="c"><span>France</span></td></tr><tr><td class="n"><span>1234709</span></td><td class="m"><span>Passport</span></td><td class="d"><span>26.06.2019</span></td><td class="d"><span>26.06.2022</span></td><td class="u"><span>ACTIVE</span></td><td class="u"><span>UK</span></td></tr><tr><td class="n"><span>1234603</span></td><td class="m"><span>Passport</span></td><td class="d"><span>26.02.2016</span></td><td class="d"><span>26.02.2026</span></td><td class="u"><span>ACTIVE</span></td><td class="c"><span>Montenegro</span></td></tr><tr><td class="n"><span>1234672</span></td><td class="m"><span>Passport</span></td><td class="d"><span></span></td><td class="d"><span>25.07.2022</span></td><td class="u"><span>ACTIVE</span></td><td class="c"><span>Serbia</span></td></tr><tr><td class="n"><span>1234617</span></td><td class="m"><span>Passport</span></td><td class="d"><span>25.05.2016</span></td><td class="d"><span>25.05.2021</span></td><td class="u"><span>ACTIVE</span></td><td class="c"><span>Australia</span></td></tr><tr><td class="n"><span>1234618</span></td><td class="m"><span>Passport</span></td><td class="d"><span>25.05.2016</span></td><td class="d"><span>25.05.2021</span></td><td class="u"><span>ACTIVE</span></td><td class="c"><span>Croatia</span></td></tr><tr><td class="n"><span>1234683</span></td><td class="m"><span>Passport</span></td><td class="d"><span></span></td><td class="d"><span>25.04.2022</span></td><td class="u"><span>ACTIVE</span></td><td class="c"><span>Albania</span></td></tr><tr><td class="n"><span>1234701</span></td><td class="m"><span>Passport</span></td><td class="d"><span></span></td><td class="d"><span>25.02.2025</span></td><td class="u"><span>ACTIVE</span></td><td class="c"><span>Germany</span></td></tr><tr><td class="n"><span>1234707</span></td><td class="m"><span>Passport</span></td><td class="d"><span>24.10.2017</span></td><td class="d"><span>24.10.2027</span></td><td class="u"><span>ACTIVE</span></td><td class="c"><span>Italy</span></td></tr><tr><td class="n"><span>1234639</span></td><td class="m"><span>Passport</span></td><td class="d"><span></span></td><td class="d"><span>24.09.2026</span></td><td class="u"><span>ACTIVE</span></td><td class="c"><span>Colombia</span></td></tr><tr><td class="n"><span>1234662</span></td><td class="m"><span>Passport</span></td><td class="d"><span>25.09.2015</span></td><td class="d"><span>24.09.2025</span></td><td class="u"><span>ACTIVE</span></td><td class="c"><span>Argentina</span></td></tr><tr><td class="n"><span>1234681</span></td><td class="m"><span>Passport</span></td><td class="d"><span>25.09.2017</span></td><td class="d"><span>24.09.2022</span></td><td class="u"><span>ACTIVE</span></td><td class="c"><span>Croatia</span></td></tr><tr><td class="n"><span>1234579</span></td><td class="m"><span>Passport</span></td><td class="d"><span></span></td><td class="d"><span>24.07.2027</span></td><td class="u"><span>ACTIVE</span></td><td class="c"><span>Albania</span></td></tr><tr><td class="n"><span>1234626</span></td><td class="m"><span>Passport</span></td><td class="d"><span></span></td><td class="d"><span>24.05.2022</span></td><td class="u"><span>ACTIVE</span></td><td class="c"><span>Germany</span></td></tr></table></div><div style="position:absolute;left:1693px;top:853px;width:108px;height:23px;border:2px solid #217346"></div><div style="position:absolute;left:1797px;top:872px;width:6px;height:6px;background:#217346;border:1px solid #fff"></div><div style="position:absolute;left:1285px;top:950px;width:632px;height:29px;background:#e6e6e6;border-top:1px solid #ababab;border-bottom:1px solid #c0c0c0"></div><div style="position:absolute;left:1285px;top:979px;width:632px;height:21px;background:#f1f1f1"></div><svg style="left:1312px;top:960px" width="6" height="8"><path d="M5 0V8L0 4Z" fill="#c6c6c6"/></svg><svg style="left:1340px;top:960px" width="6" height="8"><path d="M0 0V8L5 4Z" fill="#c6c6c6"/></svg><div style="position:absolute;left:1385px;top:950px;width:54px;height:25px;background:#fff;border-bottom:2px solid #217346;border-left:1px solid #c6c6c6;border-right:1px solid #c6c6c6"></div><div class="ui" style="left:1385.0px;top:956px;width:54px;text-align:center;color:#217346;font-weight:bold;font-size:13px;line-height:16px">Data</div><div class="ui" style="left:1439.0px;top:956px;width:90px;text-align:center;color:#444;font-size:12.5px;line-height:16px">Parameters</div><div style="position:absolute;left:1530px;top:955px;width:1px;height:19px;background:#ababab"></div><svg style="left:1564px;top:956px" width="16" height="16" viewBox="0 0 16 16"><circle cx="8" cy="8" r="7" fill="none" stroke="#8a8a8a" stroke-width="1.2"/><path d="M4.5 8H11.5M8 4.5V11.5" stroke="#777" stroke-width="1.5"/></svg><div class="ui" style="left:1293px;top:983px;color:#444;font-size:11px;line-height:14px;letter-spacing:-0.2px">Ready</div><div style="position:absolute;left:1306px;top:190px;width:604px;height:768px;border:5px solid #ed1c24"></div>
</body></html>
